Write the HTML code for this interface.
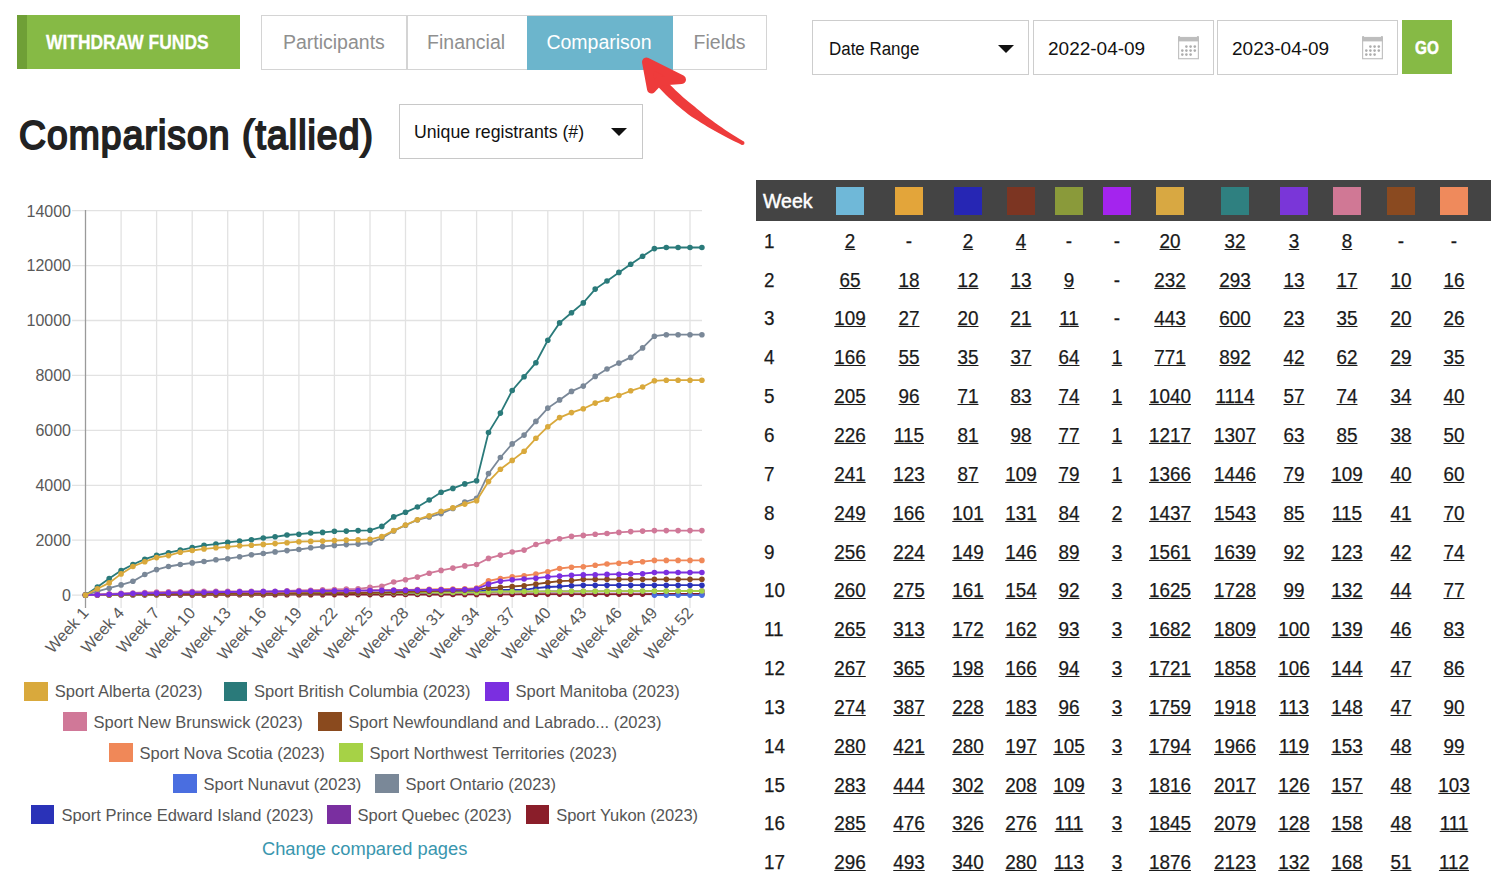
<!DOCTYPE html><html><head><meta charset="utf-8"><style>
*{margin:0;padding:0;box-sizing:border-box}
html,body{width:1491px;height:884px;overflow:hidden;background:#fff;font-family:"Liberation Sans",sans-serif}
.abs{position:absolute}
.lg{position:absolute;font-size:16.5px;color:#555;white-space:nowrap;line-height:20px}
.th{position:absolute;font-size:19.5px;color:#fff;white-space:nowrap;line-height:22px;-webkit-text-stroke:0.45px #fff}
.td{position:absolute;font-size:20.5px;color:#1a1a1a;white-space:nowrap;line-height:22px;-webkit-text-stroke:0.25px #1a1a1a;transform:scaleX(0.92);transform-origin:0 0}
.td.c{width:80px;text-align:center;transform-origin:40px 0}
.td.u span{text-decoration:underline;text-underline-offset:1.2px;text-decoration-thickness:1.4px}
.tab{position:absolute;top:15px;height:55px;border:1.5px solid #d4d4d4;font-size:19.5px;color:#8f8f8f;line-height:52px;text-align:center;white-space:nowrap}
.box{position:absolute;border:1.6px solid #cdcdcd;background:#fff;white-space:nowrap}
</style></head><body>
<div class="abs" style="left:17px;top:15px;width:223px;height:54px;background:#86ba45"></div>
<div class="abs" style="left:17px;top:15px;width:10px;height:54px;background:#6f9f36"></div>
<div class="abs" style="left:46px;top:30px;font-size:20.5px;font-weight:bold;color:#fff;line-height:24px;white-space:nowrap;-webkit-text-stroke:0.3px #fff;transform:scaleX(0.85);transform-origin:0 0">WITHDRAW FUNDS</div>
<div class="abs" style="left:260.5px;top:15px;width:506px;height:55px;border:1.5px solid #d4d4d4"></div>
<div class="abs" style="left:406px;top:15px;width:1.5px;height:55px;background:#d4d4d4"></div>
<div class="abs" style="left:527px;top:15.5px;width:145.5px;height:54px;background:#6cb5cc"></div>
<div class="abs" style="left:253.89999999999998px;top:16px;width:160px;text-align:center;font-size:19.5px;color:#8f8f8f;line-height:53px;white-space:nowrap">Participants</div>
<div class="abs" style="left:386.1px;top:16px;width:160px;text-align:center;font-size:19.5px;color:#8f8f8f;line-height:53px;white-space:nowrap">Financial</div>
<div class="abs" style="left:519px;top:16px;width:160px;text-align:center;font-size:19.5px;color:#fff;line-height:53px;white-space:nowrap">Comparison</div>
<div class="abs" style="left:639.6px;top:16px;width:160px;text-align:center;font-size:19.5px;color:#8f8f8f;line-height:53px;white-space:nowrap">Fields</div>
<div class="abs" style="left:18.8px;top:109.8px;font-size:40.6px;font-weight:normal;-webkit-text-stroke:2px #222;color:#222;line-height:50px;white-space:nowrap;letter-spacing:1.2px;transform:scaleX(0.917);transform-origin:0 0">Comparison (tallied)</div>
<div class="box" style="left:399px;top:104px;width:244px;height:55px;border-width:1.5px;border-color:#c8c8c8"></div>
<div class="abs" style="left:414px;top:121px;font-size:17.7px;color:#111;line-height:22px;white-space:nowrap">Unique registrants (#)</div>
<div class="abs" style="left:611px;top:128px;width:0;height:0;border-left:8px solid transparent;border-right:8px solid transparent;border-top:8px solid #111"></div>
<div class="box" style="left:812px;top:20px;width:217px;height:55px"></div>
<div class="abs" style="left:828.5px;top:38px;font-size:18px;color:#111;line-height:22px;white-space:nowrap;transform:scaleX(0.94);transform-origin:0 0">Date Range</div>
<div class="abs" style="left:998px;top:45px;width:0;height:0;border-left:8px solid transparent;border-right:8px solid transparent;border-top:8px solid #111"></div>
<div class="box" style="left:1033px;top:20px;width:181px;height:55px"></div>
<div class="abs" style="left:1048px;top:38px;font-size:19px;color:#111;line-height:22px;white-space:nowrap">2022-04-09</div>
<svg class="abs" style="left:1178px;top:36px" width="22" height="24"><rect x="0.6" y="1.5" width="19.8" height="21.2" fill="none" stroke="#c2c2c2" stroke-width="1.2"/><rect x="0" y="1.2" width="21" height="4.2" fill="#bdbdbd"/><rect x="0" y="0" width="2.2" height="3" rx="1" fill="#bdbdbd"/><rect x="18.8" y="0" width="2.2" height="3" rx="1" fill="#bdbdbd"/><circle cx="8.4" cy="10.6" r="1.3" fill="#adadad"/><circle cx="12.6" cy="10.6" r="1.3" fill="#adadad"/><circle cx="16.8" cy="10.6" r="1.3" fill="#adadad"/><circle cx="4.3" cy="14.6" r="1.3" fill="#adadad"/><circle cx="8.4" cy="14.6" r="1.3" fill="#adadad"/><circle cx="12.6" cy="14.6" r="1.3" fill="#adadad"/><circle cx="16.8" cy="14.6" r="1.3" fill="#adadad"/><circle cx="4.3" cy="18.6" r="1.3" fill="#adadad"/><circle cx="8.4" cy="18.6" r="1.3" fill="#adadad"/><circle cx="12.6" cy="18.6" r="1.3" fill="#adadad"/></svg>
<div class="box" style="left:1217px;top:20px;width:181px;height:55px"></div>
<div class="abs" style="left:1232px;top:38px;font-size:19px;color:#111;line-height:22px;white-space:nowrap">2023-04-09</div>
<svg class="abs" style="left:1362px;top:36px" width="22" height="24"><rect x="0.6" y="1.5" width="19.8" height="21.2" fill="none" stroke="#c2c2c2" stroke-width="1.2"/><rect x="0" y="1.2" width="21" height="4.2" fill="#bdbdbd"/><rect x="0" y="0" width="2.2" height="3" rx="1" fill="#bdbdbd"/><rect x="18.8" y="0" width="2.2" height="3" rx="1" fill="#bdbdbd"/><circle cx="8.4" cy="10.6" r="1.3" fill="#adadad"/><circle cx="12.6" cy="10.6" r="1.3" fill="#adadad"/><circle cx="16.8" cy="10.6" r="1.3" fill="#adadad"/><circle cx="4.3" cy="14.6" r="1.3" fill="#adadad"/><circle cx="8.4" cy="14.6" r="1.3" fill="#adadad"/><circle cx="12.6" cy="14.6" r="1.3" fill="#adadad"/><circle cx="16.8" cy="14.6" r="1.3" fill="#adadad"/><circle cx="4.3" cy="18.6" r="1.3" fill="#adadad"/><circle cx="8.4" cy="18.6" r="1.3" fill="#adadad"/><circle cx="12.6" cy="18.6" r="1.3" fill="#adadad"/></svg>
<div class="abs" style="left:1402px;top:20px;width:50px;height:54px;background:#86ba45"></div>
<div class="abs" style="left:1402px;top:36px;width:50px;text-align:center;font-size:18px;font-weight:bold;color:#fff;line-height:24px;-webkit-text-stroke:0.5px #fff;transform:scaleX(0.85)">GO</div>
<div style="position:absolute;left:756px;top:180px;width:735px;height:41px;background:#444"></div>
<div class="th" style="left:763px;top:190px">Week</div>
<div style="position:absolute;left:836.0px;top:187px;width:28px;height:28px;background:#6fb8d8"></div>
<div style="position:absolute;left:895.0px;top:187px;width:28px;height:28px;background:#e3a53a"></div>
<div style="position:absolute;left:954.0px;top:187px;width:28px;height:28px;background:#2626b4"></div>
<div style="position:absolute;left:1007.0px;top:187px;width:28px;height:28px;background:#7c3522"></div>
<div style="position:absolute;left:1055.0px;top:187px;width:28px;height:28px;background:#8a9a3a"></div>
<div style="position:absolute;left:1102.5px;top:187px;width:28px;height:28px;background:#a424ee"></div>
<div style="position:absolute;left:1156.0px;top:187px;width:28px;height:28px;background:#d8a842"></div>
<div style="position:absolute;left:1220.6px;top:187px;width:28px;height:28px;background:#2f8080"></div>
<div style="position:absolute;left:1280.0px;top:187px;width:28px;height:28px;background:#7a36d8"></div>
<div style="position:absolute;left:1333.0px;top:187px;width:28px;height:28px;background:#d07895"></div>
<div style="position:absolute;left:1386.6px;top:187px;width:28px;height:28px;background:#8a4a20"></div>
<div style="position:absolute;left:1440.0px;top:187px;width:28px;height:28px;background:#ef8a5c"></div>
<div class="td" style="left:764px;top:229.7px">1</div>
<div class="td c u" style="left:810.0px;top:229.7px"><span>2</span></div>
<div class="td c" style="left:869.0px;top:229.7px">-</div>
<div class="td c u" style="left:928.0px;top:229.7px"><span>2</span></div>
<div class="td c u" style="left:981.0px;top:229.7px"><span>4</span></div>
<div class="td c" style="left:1029.0px;top:229.7px">-</div>
<div class="td c" style="left:1076.5px;top:229.7px">-</div>
<div class="td c u" style="left:1130.0px;top:229.7px"><span>20</span></div>
<div class="td c u" style="left:1194.6px;top:229.7px"><span>32</span></div>
<div class="td c u" style="left:1254.0px;top:229.7px"><span>3</span></div>
<div class="td c u" style="left:1307.0px;top:229.7px"><span>8</span></div>
<div class="td c" style="left:1360.6px;top:229.7px">-</div>
<div class="td c" style="left:1414.0px;top:229.7px">-</div>
<div class="td" style="left:764px;top:268.6px">2</div>
<div class="td c u" style="left:810.0px;top:268.6px"><span>65</span></div>
<div class="td c u" style="left:869.0px;top:268.6px"><span>18</span></div>
<div class="td c u" style="left:928.0px;top:268.6px"><span>12</span></div>
<div class="td c u" style="left:981.0px;top:268.6px"><span>13</span></div>
<div class="td c u" style="left:1029.0px;top:268.6px"><span>9</span></div>
<div class="td c" style="left:1076.5px;top:268.6px">-</div>
<div class="td c u" style="left:1130.0px;top:268.6px"><span>232</span></div>
<div class="td c u" style="left:1194.6px;top:268.6px"><span>293</span></div>
<div class="td c u" style="left:1254.0px;top:268.6px"><span>13</span></div>
<div class="td c u" style="left:1307.0px;top:268.6px"><span>17</span></div>
<div class="td c u" style="left:1360.6px;top:268.6px"><span>10</span></div>
<div class="td c u" style="left:1414.0px;top:268.6px"><span>16</span></div>
<div class="td" style="left:764px;top:307.4px">3</div>
<div class="td c u" style="left:810.0px;top:307.4px"><span>109</span></div>
<div class="td c u" style="left:869.0px;top:307.4px"><span>27</span></div>
<div class="td c u" style="left:928.0px;top:307.4px"><span>20</span></div>
<div class="td c u" style="left:981.0px;top:307.4px"><span>21</span></div>
<div class="td c u" style="left:1029.0px;top:307.4px"><span>11</span></div>
<div class="td c" style="left:1076.5px;top:307.4px">-</div>
<div class="td c u" style="left:1130.0px;top:307.4px"><span>443</span></div>
<div class="td c u" style="left:1194.6px;top:307.4px"><span>600</span></div>
<div class="td c u" style="left:1254.0px;top:307.4px"><span>23</span></div>
<div class="td c u" style="left:1307.0px;top:307.4px"><span>35</span></div>
<div class="td c u" style="left:1360.6px;top:307.4px"><span>20</span></div>
<div class="td c u" style="left:1414.0px;top:307.4px"><span>26</span></div>
<div class="td" style="left:764px;top:346.2px">4</div>
<div class="td c u" style="left:810.0px;top:346.2px"><span>166</span></div>
<div class="td c u" style="left:869.0px;top:346.2px"><span>55</span></div>
<div class="td c u" style="left:928.0px;top:346.2px"><span>35</span></div>
<div class="td c u" style="left:981.0px;top:346.2px"><span>37</span></div>
<div class="td c u" style="left:1029.0px;top:346.2px"><span>64</span></div>
<div class="td c u" style="left:1076.5px;top:346.2px"><span>1</span></div>
<div class="td c u" style="left:1130.0px;top:346.2px"><span>771</span></div>
<div class="td c u" style="left:1194.6px;top:346.2px"><span>892</span></div>
<div class="td c u" style="left:1254.0px;top:346.2px"><span>42</span></div>
<div class="td c u" style="left:1307.0px;top:346.2px"><span>62</span></div>
<div class="td c u" style="left:1360.6px;top:346.2px"><span>29</span></div>
<div class="td c u" style="left:1414.0px;top:346.2px"><span>35</span></div>
<div class="td" style="left:764px;top:385.1px">5</div>
<div class="td c u" style="left:810.0px;top:385.1px"><span>205</span></div>
<div class="td c u" style="left:869.0px;top:385.1px"><span>96</span></div>
<div class="td c u" style="left:928.0px;top:385.1px"><span>71</span></div>
<div class="td c u" style="left:981.0px;top:385.1px"><span>83</span></div>
<div class="td c u" style="left:1029.0px;top:385.1px"><span>74</span></div>
<div class="td c u" style="left:1076.5px;top:385.1px"><span>1</span></div>
<div class="td c u" style="left:1130.0px;top:385.1px"><span>1040</span></div>
<div class="td c u" style="left:1194.6px;top:385.1px"><span>1114</span></div>
<div class="td c u" style="left:1254.0px;top:385.1px"><span>57</span></div>
<div class="td c u" style="left:1307.0px;top:385.1px"><span>74</span></div>
<div class="td c u" style="left:1360.6px;top:385.1px"><span>34</span></div>
<div class="td c u" style="left:1414.0px;top:385.1px"><span>40</span></div>
<div class="td" style="left:764px;top:423.9px">6</div>
<div class="td c u" style="left:810.0px;top:423.9px"><span>226</span></div>
<div class="td c u" style="left:869.0px;top:423.9px"><span>115</span></div>
<div class="td c u" style="left:928.0px;top:423.9px"><span>81</span></div>
<div class="td c u" style="left:981.0px;top:423.9px"><span>98</span></div>
<div class="td c u" style="left:1029.0px;top:423.9px"><span>77</span></div>
<div class="td c u" style="left:1076.5px;top:423.9px"><span>1</span></div>
<div class="td c u" style="left:1130.0px;top:423.9px"><span>1217</span></div>
<div class="td c u" style="left:1194.6px;top:423.9px"><span>1307</span></div>
<div class="td c u" style="left:1254.0px;top:423.9px"><span>63</span></div>
<div class="td c u" style="left:1307.0px;top:423.9px"><span>85</span></div>
<div class="td c u" style="left:1360.6px;top:423.9px"><span>38</span></div>
<div class="td c u" style="left:1414.0px;top:423.9px"><span>50</span></div>
<div class="td" style="left:764px;top:462.8px">7</div>
<div class="td c u" style="left:810.0px;top:462.8px"><span>241</span></div>
<div class="td c u" style="left:869.0px;top:462.8px"><span>123</span></div>
<div class="td c u" style="left:928.0px;top:462.8px"><span>87</span></div>
<div class="td c u" style="left:981.0px;top:462.8px"><span>109</span></div>
<div class="td c u" style="left:1029.0px;top:462.8px"><span>79</span></div>
<div class="td c u" style="left:1076.5px;top:462.8px"><span>1</span></div>
<div class="td c u" style="left:1130.0px;top:462.8px"><span>1366</span></div>
<div class="td c u" style="left:1194.6px;top:462.8px"><span>1446</span></div>
<div class="td c u" style="left:1254.0px;top:462.8px"><span>79</span></div>
<div class="td c u" style="left:1307.0px;top:462.8px"><span>109</span></div>
<div class="td c u" style="left:1360.6px;top:462.8px"><span>40</span></div>
<div class="td c u" style="left:1414.0px;top:462.8px"><span>60</span></div>
<div class="td" style="left:764px;top:501.6px">8</div>
<div class="td c u" style="left:810.0px;top:501.6px"><span>249</span></div>
<div class="td c u" style="left:869.0px;top:501.6px"><span>166</span></div>
<div class="td c u" style="left:928.0px;top:501.6px"><span>101</span></div>
<div class="td c u" style="left:981.0px;top:501.6px"><span>131</span></div>
<div class="td c u" style="left:1029.0px;top:501.6px"><span>84</span></div>
<div class="td c u" style="left:1076.5px;top:501.6px"><span>2</span></div>
<div class="td c u" style="left:1130.0px;top:501.6px"><span>1437</span></div>
<div class="td c u" style="left:1194.6px;top:501.6px"><span>1543</span></div>
<div class="td c u" style="left:1254.0px;top:501.6px"><span>85</span></div>
<div class="td c u" style="left:1307.0px;top:501.6px"><span>115</span></div>
<div class="td c u" style="left:1360.6px;top:501.6px"><span>41</span></div>
<div class="td c u" style="left:1414.0px;top:501.6px"><span>70</span></div>
<div class="td" style="left:764px;top:540.5px">9</div>
<div class="td c u" style="left:810.0px;top:540.5px"><span>256</span></div>
<div class="td c u" style="left:869.0px;top:540.5px"><span>224</span></div>
<div class="td c u" style="left:928.0px;top:540.5px"><span>149</span></div>
<div class="td c u" style="left:981.0px;top:540.5px"><span>146</span></div>
<div class="td c u" style="left:1029.0px;top:540.5px"><span>89</span></div>
<div class="td c u" style="left:1076.5px;top:540.5px"><span>3</span></div>
<div class="td c u" style="left:1130.0px;top:540.5px"><span>1561</span></div>
<div class="td c u" style="left:1194.6px;top:540.5px"><span>1639</span></div>
<div class="td c u" style="left:1254.0px;top:540.5px"><span>92</span></div>
<div class="td c u" style="left:1307.0px;top:540.5px"><span>123</span></div>
<div class="td c u" style="left:1360.6px;top:540.5px"><span>42</span></div>
<div class="td c u" style="left:1414.0px;top:540.5px"><span>74</span></div>
<div class="td" style="left:764px;top:579.4px">10</div>
<div class="td c u" style="left:810.0px;top:579.4px"><span>260</span></div>
<div class="td c u" style="left:869.0px;top:579.4px"><span>275</span></div>
<div class="td c u" style="left:928.0px;top:579.4px"><span>161</span></div>
<div class="td c u" style="left:981.0px;top:579.4px"><span>154</span></div>
<div class="td c u" style="left:1029.0px;top:579.4px"><span>92</span></div>
<div class="td c u" style="left:1076.5px;top:579.4px"><span>3</span></div>
<div class="td c u" style="left:1130.0px;top:579.4px"><span>1625</span></div>
<div class="td c u" style="left:1194.6px;top:579.4px"><span>1728</span></div>
<div class="td c u" style="left:1254.0px;top:579.4px"><span>99</span></div>
<div class="td c u" style="left:1307.0px;top:579.4px"><span>132</span></div>
<div class="td c u" style="left:1360.6px;top:579.4px"><span>44</span></div>
<div class="td c u" style="left:1414.0px;top:579.4px"><span>77</span></div>
<div class="td" style="left:764px;top:618.2px">11</div>
<div class="td c u" style="left:810.0px;top:618.2px"><span>265</span></div>
<div class="td c u" style="left:869.0px;top:618.2px"><span>313</span></div>
<div class="td c u" style="left:928.0px;top:618.2px"><span>172</span></div>
<div class="td c u" style="left:981.0px;top:618.2px"><span>162</span></div>
<div class="td c u" style="left:1029.0px;top:618.2px"><span>93</span></div>
<div class="td c u" style="left:1076.5px;top:618.2px"><span>3</span></div>
<div class="td c u" style="left:1130.0px;top:618.2px"><span>1682</span></div>
<div class="td c u" style="left:1194.6px;top:618.2px"><span>1809</span></div>
<div class="td c u" style="left:1254.0px;top:618.2px"><span>100</span></div>
<div class="td c u" style="left:1307.0px;top:618.2px"><span>139</span></div>
<div class="td c u" style="left:1360.6px;top:618.2px"><span>46</span></div>
<div class="td c u" style="left:1414.0px;top:618.2px"><span>83</span></div>
<div class="td" style="left:764px;top:657.1px">12</div>
<div class="td c u" style="left:810.0px;top:657.1px"><span>267</span></div>
<div class="td c u" style="left:869.0px;top:657.1px"><span>365</span></div>
<div class="td c u" style="left:928.0px;top:657.1px"><span>198</span></div>
<div class="td c u" style="left:981.0px;top:657.1px"><span>166</span></div>
<div class="td c u" style="left:1029.0px;top:657.1px"><span>94</span></div>
<div class="td c u" style="left:1076.5px;top:657.1px"><span>3</span></div>
<div class="td c u" style="left:1130.0px;top:657.1px"><span>1721</span></div>
<div class="td c u" style="left:1194.6px;top:657.1px"><span>1858</span></div>
<div class="td c u" style="left:1254.0px;top:657.1px"><span>106</span></div>
<div class="td c u" style="left:1307.0px;top:657.1px"><span>144</span></div>
<div class="td c u" style="left:1360.6px;top:657.1px"><span>47</span></div>
<div class="td c u" style="left:1414.0px;top:657.1px"><span>86</span></div>
<div class="td" style="left:764px;top:695.9px">13</div>
<div class="td c u" style="left:810.0px;top:695.9px"><span>274</span></div>
<div class="td c u" style="left:869.0px;top:695.9px"><span>387</span></div>
<div class="td c u" style="left:928.0px;top:695.9px"><span>228</span></div>
<div class="td c u" style="left:981.0px;top:695.9px"><span>183</span></div>
<div class="td c u" style="left:1029.0px;top:695.9px"><span>96</span></div>
<div class="td c u" style="left:1076.5px;top:695.9px"><span>3</span></div>
<div class="td c u" style="left:1130.0px;top:695.9px"><span>1759</span></div>
<div class="td c u" style="left:1194.6px;top:695.9px"><span>1918</span></div>
<div class="td c u" style="left:1254.0px;top:695.9px"><span>113</span></div>
<div class="td c u" style="left:1307.0px;top:695.9px"><span>148</span></div>
<div class="td c u" style="left:1360.6px;top:695.9px"><span>47</span></div>
<div class="td c u" style="left:1414.0px;top:695.9px"><span>90</span></div>
<div class="td" style="left:764px;top:734.8px">14</div>
<div class="td c u" style="left:810.0px;top:734.8px"><span>280</span></div>
<div class="td c u" style="left:869.0px;top:734.8px"><span>421</span></div>
<div class="td c u" style="left:928.0px;top:734.8px"><span>280</span></div>
<div class="td c u" style="left:981.0px;top:734.8px"><span>197</span></div>
<div class="td c u" style="left:1029.0px;top:734.8px"><span>105</span></div>
<div class="td c u" style="left:1076.5px;top:734.8px"><span>3</span></div>
<div class="td c u" style="left:1130.0px;top:734.8px"><span>1794</span></div>
<div class="td c u" style="left:1194.6px;top:734.8px"><span>1966</span></div>
<div class="td c u" style="left:1254.0px;top:734.8px"><span>119</span></div>
<div class="td c u" style="left:1307.0px;top:734.8px"><span>153</span></div>
<div class="td c u" style="left:1360.6px;top:734.8px"><span>48</span></div>
<div class="td c u" style="left:1414.0px;top:734.8px"><span>99</span></div>
<div class="td" style="left:764px;top:773.6px">15</div>
<div class="td c u" style="left:810.0px;top:773.6px"><span>283</span></div>
<div class="td c u" style="left:869.0px;top:773.6px"><span>444</span></div>
<div class="td c u" style="left:928.0px;top:773.6px"><span>302</span></div>
<div class="td c u" style="left:981.0px;top:773.6px"><span>208</span></div>
<div class="td c u" style="left:1029.0px;top:773.6px"><span>109</span></div>
<div class="td c u" style="left:1076.5px;top:773.6px"><span>3</span></div>
<div class="td c u" style="left:1130.0px;top:773.6px"><span>1816</span></div>
<div class="td c u" style="left:1194.6px;top:773.6px"><span>2017</span></div>
<div class="td c u" style="left:1254.0px;top:773.6px"><span>126</span></div>
<div class="td c u" style="left:1307.0px;top:773.6px"><span>157</span></div>
<div class="td c u" style="left:1360.6px;top:773.6px"><span>48</span></div>
<div class="td c u" style="left:1414.0px;top:773.6px"><span>103</span></div>
<div class="td" style="left:764px;top:812.4px">16</div>
<div class="td c u" style="left:810.0px;top:812.4px"><span>285</span></div>
<div class="td c u" style="left:869.0px;top:812.4px"><span>476</span></div>
<div class="td c u" style="left:928.0px;top:812.4px"><span>326</span></div>
<div class="td c u" style="left:981.0px;top:812.4px"><span>276</span></div>
<div class="td c u" style="left:1029.0px;top:812.4px"><span>111</span></div>
<div class="td c u" style="left:1076.5px;top:812.4px"><span>3</span></div>
<div class="td c u" style="left:1130.0px;top:812.4px"><span>1845</span></div>
<div class="td c u" style="left:1194.6px;top:812.4px"><span>2079</span></div>
<div class="td c u" style="left:1254.0px;top:812.4px"><span>128</span></div>
<div class="td c u" style="left:1307.0px;top:812.4px"><span>158</span></div>
<div class="td c u" style="left:1360.6px;top:812.4px"><span>48</span></div>
<div class="td c u" style="left:1414.0px;top:812.4px"><span>111</span></div>
<div class="td" style="left:764px;top:851.3px">17</div>
<div class="td c u" style="left:810.0px;top:851.3px"><span>296</span></div>
<div class="td c u" style="left:869.0px;top:851.3px"><span>493</span></div>
<div class="td c u" style="left:928.0px;top:851.3px"><span>340</span></div>
<div class="td c u" style="left:981.0px;top:851.3px"><span>280</span></div>
<div class="td c u" style="left:1029.0px;top:851.3px"><span>113</span></div>
<div class="td c u" style="left:1076.5px;top:851.3px"><span>3</span></div>
<div class="td c u" style="left:1130.0px;top:851.3px"><span>1876</span></div>
<div class="td c u" style="left:1194.6px;top:851.3px"><span>2123</span></div>
<div class="td c u" style="left:1254.0px;top:851.3px"><span>132</span></div>
<div class="td c u" style="left:1307.0px;top:851.3px"><span>168</span></div>
<div class="td c u" style="left:1360.6px;top:851.3px"><span>51</span></div>
<div class="td c u" style="left:1414.0px;top:851.3px"><span>112</span></div>
<svg width="1491" height="884" style="position:absolute;left:0;top:0">
<line x1="72" y1="595.1" x2="702" y2="595.1" stroke="#e2e2e2" stroke-width="1.3"/>
<line x1="72" y1="540.2" x2="702" y2="540.2" stroke="#e2e2e2" stroke-width="1.3"/>
<line x1="72" y1="485.3" x2="702" y2="485.3" stroke="#e2e2e2" stroke-width="1.3"/>
<line x1="72" y1="430.3" x2="702" y2="430.3" stroke="#e2e2e2" stroke-width="1.3"/>
<line x1="72" y1="375.4" x2="702" y2="375.4" stroke="#e2e2e2" stroke-width="1.3"/>
<line x1="72" y1="320.5" x2="702" y2="320.5" stroke="#e2e2e2" stroke-width="1.3"/>
<line x1="72" y1="265.6" x2="702" y2="265.6" stroke="#e2e2e2" stroke-width="1.3"/>
<line x1="72" y1="210.7" x2="702" y2="210.7" stroke="#e2e2e2" stroke-width="1.3"/>
<line x1="85.5" y1="210" x2="85.5" y2="608" stroke="#9a9a9a" stroke-width="1.3"/>
<line x1="121.1" y1="210" x2="121.1" y2="608" stroke="#e2e2e2" stroke-width="1.3"/>
<line x1="156.6" y1="210" x2="156.6" y2="608" stroke="#e2e2e2" stroke-width="1.3"/>
<line x1="192.2" y1="210" x2="192.2" y2="608" stroke="#e2e2e2" stroke-width="1.3"/>
<line x1="227.7" y1="210" x2="227.7" y2="608" stroke="#e2e2e2" stroke-width="1.3"/>
<line x1="263.3" y1="210" x2="263.3" y2="608" stroke="#e2e2e2" stroke-width="1.3"/>
<line x1="298.9" y1="210" x2="298.9" y2="608" stroke="#e2e2e2" stroke-width="1.3"/>
<line x1="334.4" y1="210" x2="334.4" y2="608" stroke="#e2e2e2" stroke-width="1.3"/>
<line x1="370.0" y1="210" x2="370.0" y2="608" stroke="#e2e2e2" stroke-width="1.3"/>
<line x1="405.5" y1="210" x2="405.5" y2="608" stroke="#e2e2e2" stroke-width="1.3"/>
<line x1="441.1" y1="210" x2="441.1" y2="608" stroke="#e2e2e2" stroke-width="1.3"/>
<line x1="476.6" y1="210" x2="476.6" y2="608" stroke="#e2e2e2" stroke-width="1.3"/>
<line x1="512.2" y1="210" x2="512.2" y2="608" stroke="#e2e2e2" stroke-width="1.3"/>
<line x1="547.8" y1="210" x2="547.8" y2="608" stroke="#e2e2e2" stroke-width="1.3"/>
<line x1="583.3" y1="210" x2="583.3" y2="608" stroke="#e2e2e2" stroke-width="1.3"/>
<line x1="618.9" y1="210" x2="618.9" y2="608" stroke="#e2e2e2" stroke-width="1.3"/>
<line x1="654.4" y1="210" x2="654.4" y2="608" stroke="#e2e2e2" stroke-width="1.3"/>
<line x1="690.0" y1="210" x2="690.0" y2="608" stroke="#e2e2e2" stroke-width="1.3"/>
<text x="71" y="600.9" text-anchor="end" font-family="Liberation Sans" font-size="16" fill="#595959">0</text>
<text x="71" y="546.0" text-anchor="end" font-family="Liberation Sans" font-size="16" fill="#595959">2000</text>
<text x="71" y="491.1" text-anchor="end" font-family="Liberation Sans" font-size="16" fill="#595959">4000</text>
<text x="71" y="436.1" text-anchor="end" font-family="Liberation Sans" font-size="16" fill="#595959">6000</text>
<text x="71" y="381.2" text-anchor="end" font-family="Liberation Sans" font-size="16" fill="#595959">8000</text>
<text x="71" y="326.3" text-anchor="end" font-family="Liberation Sans" font-size="16" fill="#595959">10000</text>
<text x="71" y="271.4" text-anchor="end" font-family="Liberation Sans" font-size="16" fill="#595959">12000</text>
<text x="71" y="216.5" text-anchor="end" font-family="Liberation Sans" font-size="16" fill="#595959">14000</text>
<text transform="translate(89.5,613.5) rotate(-48)" text-anchor="end" font-family="Liberation Sans" font-size="16.3" fill="#595959">Week 1</text>
<text transform="translate(125.1,613.5) rotate(-48)" text-anchor="end" font-family="Liberation Sans" font-size="16.3" fill="#595959">Week 4</text>
<text transform="translate(160.6,613.5) rotate(-48)" text-anchor="end" font-family="Liberation Sans" font-size="16.3" fill="#595959">Week 7</text>
<text transform="translate(196.2,613.5) rotate(-48)" text-anchor="end" font-family="Liberation Sans" font-size="16.3" fill="#595959">Week 10</text>
<text transform="translate(231.7,613.5) rotate(-48)" text-anchor="end" font-family="Liberation Sans" font-size="16.3" fill="#595959">Week 13</text>
<text transform="translate(267.3,613.5) rotate(-48)" text-anchor="end" font-family="Liberation Sans" font-size="16.3" fill="#595959">Week 16</text>
<text transform="translate(302.9,613.5) rotate(-48)" text-anchor="end" font-family="Liberation Sans" font-size="16.3" fill="#595959">Week 19</text>
<text transform="translate(338.4,613.5) rotate(-48)" text-anchor="end" font-family="Liberation Sans" font-size="16.3" fill="#595959">Week 22</text>
<text transform="translate(374.0,613.5) rotate(-48)" text-anchor="end" font-family="Liberation Sans" font-size="16.3" fill="#595959">Week 25</text>
<text transform="translate(409.5,613.5) rotate(-48)" text-anchor="end" font-family="Liberation Sans" font-size="16.3" fill="#595959">Week 28</text>
<text transform="translate(445.1,613.5) rotate(-48)" text-anchor="end" font-family="Liberation Sans" font-size="16.3" fill="#595959">Week 31</text>
<text transform="translate(480.6,613.5) rotate(-48)" text-anchor="end" font-family="Liberation Sans" font-size="16.3" fill="#595959">Week 34</text>
<text transform="translate(516.2,613.5) rotate(-48)" text-anchor="end" font-family="Liberation Sans" font-size="16.3" fill="#595959">Week 37</text>
<text transform="translate(551.8,613.5) rotate(-48)" text-anchor="end" font-family="Liberation Sans" font-size="16.3" fill="#595959">Week 40</text>
<text transform="translate(587.3,613.5) rotate(-48)" text-anchor="end" font-family="Liberation Sans" font-size="16.3" fill="#595959">Week 43</text>
<text transform="translate(622.9,613.5) rotate(-48)" text-anchor="end" font-family="Liberation Sans" font-size="16.3" fill="#595959">Week 46</text>
<text transform="translate(658.4,613.5) rotate(-48)" text-anchor="end" font-family="Liberation Sans" font-size="16.3" fill="#595959">Week 49</text>
<text transform="translate(694.0,613.5) rotate(-48)" text-anchor="end" font-family="Liberation Sans" font-size="16.3" fill="#595959">Week 52</text>
<polyline points="85.5,595.1 97.4,595.1 109.2,595.1 121.1,595.0 132.9,595.0 144.8,595.0 156.6,595.0 168.5,594.9 180.3,594.9 192.2,594.9 204.0,594.9 215.9,594.9 227.7,594.8 239.6,594.8 251.4,594.8 263.3,594.8 275.1,594.8 287.0,594.7 298.9,594.7 310.7,594.7 322.6,594.7 334.4,594.6 346.3,594.6 358.1,594.6 370.0,594.6 381.8,594.6 393.7,594.6 405.5,594.5 417.4,594.5 429.2,594.5 441.1,594.5 452.9,594.5 464.8,594.4 476.6,594.4 488.5,594.4 500.4,594.3 512.2,594.3 524.1,594.2 535.9,594.2 547.8,594.1 559.6,594.1 571.5,594.1 583.3,594.1 595.2,594.1 607.0,594.1 618.9,594.1 630.7,594.1 642.6,594.1 654.4,594.0 666.3,594.0 678.1,594.0 690.0,594.0 701.9,594.0" fill="none" stroke="#8a1e2a" stroke-width="1.8"/>
<circle cx="85.5" cy="595.1" r="2.8" fill="#8a1e2a"/>
<circle cx="97.4" cy="595.1" r="2.8" fill="#8a1e2a"/>
<circle cx="109.2" cy="595.1" r="2.8" fill="#8a1e2a"/>
<circle cx="121.1" cy="595.0" r="2.8" fill="#8a1e2a"/>
<circle cx="132.9" cy="595.0" r="2.8" fill="#8a1e2a"/>
<circle cx="144.8" cy="595.0" r="2.8" fill="#8a1e2a"/>
<circle cx="156.6" cy="595.0" r="2.8" fill="#8a1e2a"/>
<circle cx="168.5" cy="594.9" r="2.8" fill="#8a1e2a"/>
<circle cx="180.3" cy="594.9" r="2.8" fill="#8a1e2a"/>
<circle cx="192.2" cy="594.9" r="2.8" fill="#8a1e2a"/>
<circle cx="204.0" cy="594.9" r="2.8" fill="#8a1e2a"/>
<circle cx="215.9" cy="594.9" r="2.8" fill="#8a1e2a"/>
<circle cx="227.7" cy="594.8" r="2.8" fill="#8a1e2a"/>
<circle cx="239.6" cy="594.8" r="2.8" fill="#8a1e2a"/>
<circle cx="251.4" cy="594.8" r="2.8" fill="#8a1e2a"/>
<circle cx="263.3" cy="594.8" r="2.8" fill="#8a1e2a"/>
<circle cx="275.1" cy="594.8" r="2.8" fill="#8a1e2a"/>
<circle cx="287.0" cy="594.7" r="2.8" fill="#8a1e2a"/>
<circle cx="298.9" cy="594.7" r="2.8" fill="#8a1e2a"/>
<circle cx="310.7" cy="594.7" r="2.8" fill="#8a1e2a"/>
<circle cx="322.6" cy="594.7" r="2.8" fill="#8a1e2a"/>
<circle cx="334.4" cy="594.6" r="2.8" fill="#8a1e2a"/>
<circle cx="346.3" cy="594.6" r="2.8" fill="#8a1e2a"/>
<circle cx="358.1" cy="594.6" r="2.8" fill="#8a1e2a"/>
<circle cx="370.0" cy="594.6" r="2.8" fill="#8a1e2a"/>
<circle cx="381.8" cy="594.6" r="2.8" fill="#8a1e2a"/>
<circle cx="393.7" cy="594.6" r="2.8" fill="#8a1e2a"/>
<circle cx="405.5" cy="594.5" r="2.8" fill="#8a1e2a"/>
<circle cx="417.4" cy="594.5" r="2.8" fill="#8a1e2a"/>
<circle cx="429.2" cy="594.5" r="2.8" fill="#8a1e2a"/>
<circle cx="441.1" cy="594.5" r="2.8" fill="#8a1e2a"/>
<circle cx="452.9" cy="594.5" r="2.8" fill="#8a1e2a"/>
<circle cx="464.8" cy="594.4" r="2.8" fill="#8a1e2a"/>
<circle cx="476.6" cy="594.4" r="2.8" fill="#8a1e2a"/>
<circle cx="488.5" cy="594.4" r="2.8" fill="#8a1e2a"/>
<circle cx="500.4" cy="594.3" r="2.8" fill="#8a1e2a"/>
<circle cx="512.2" cy="594.3" r="2.8" fill="#8a1e2a"/>
<circle cx="524.1" cy="594.2" r="2.8" fill="#8a1e2a"/>
<circle cx="535.9" cy="594.2" r="2.8" fill="#8a1e2a"/>
<circle cx="547.8" cy="594.1" r="2.8" fill="#8a1e2a"/>
<circle cx="559.6" cy="594.1" r="2.8" fill="#8a1e2a"/>
<circle cx="571.5" cy="594.1" r="2.8" fill="#8a1e2a"/>
<circle cx="583.3" cy="594.1" r="2.8" fill="#8a1e2a"/>
<circle cx="595.2" cy="594.1" r="2.8" fill="#8a1e2a"/>
<circle cx="607.0" cy="594.1" r="2.8" fill="#8a1e2a"/>
<circle cx="618.9" cy="594.1" r="2.8" fill="#8a1e2a"/>
<circle cx="630.7" cy="594.1" r="2.8" fill="#8a1e2a"/>
<circle cx="642.6" cy="594.1" r="2.8" fill="#8a1e2a"/>
<circle cx="654.4" cy="594.0" r="2.8" fill="#8a1e2a"/>
<circle cx="666.3" cy="594.0" r="2.8" fill="#8a1e2a"/>
<circle cx="678.1" cy="594.0" r="2.8" fill="#8a1e2a"/>
<circle cx="690.0" cy="594.0" r="2.8" fill="#8a1e2a"/>
<circle cx="701.9" cy="594.0" r="2.8" fill="#8a1e2a"/>
<polyline points="85.5,595.1 97.4,595.0 109.2,594.9 121.1,594.8 132.9,594.7 144.8,594.6 156.6,594.5 168.5,594.4 180.3,594.2 192.2,594.1 204.0,594.1 215.9,594.0 227.7,593.9 239.6,593.9 251.4,593.8 263.3,593.7 275.1,593.7 287.0,593.6 298.9,593.5 310.7,593.5 322.6,593.4 334.4,593.3 346.3,593.2 358.1,593.2 370.0,593.1 381.8,593.0 393.7,593.0 405.5,592.9 417.4,592.8 429.2,592.8 441.1,592.7 452.9,592.6 464.8,592.6 476.6,592.5 488.5,592.1 500.4,591.7 512.2,591.6 524.1,591.6 535.9,591.6 547.8,591.5 559.6,591.5 571.5,591.5 583.3,591.4 595.2,591.4 607.0,591.4 618.9,591.3 630.7,591.3 642.6,591.3 654.4,591.2 666.3,591.2 678.1,591.2 690.0,591.2 701.9,591.1" fill="none" stroke="#7a2fa0" stroke-width="1.8"/>
<circle cx="85.5" cy="595.1" r="2.8" fill="#7a2fa0"/>
<circle cx="97.4" cy="595.0" r="2.8" fill="#7a2fa0"/>
<circle cx="109.2" cy="594.9" r="2.8" fill="#7a2fa0"/>
<circle cx="121.1" cy="594.8" r="2.8" fill="#7a2fa0"/>
<circle cx="132.9" cy="594.7" r="2.8" fill="#7a2fa0"/>
<circle cx="144.8" cy="594.6" r="2.8" fill="#7a2fa0"/>
<circle cx="156.6" cy="594.5" r="2.8" fill="#7a2fa0"/>
<circle cx="168.5" cy="594.4" r="2.8" fill="#7a2fa0"/>
<circle cx="180.3" cy="594.2" r="2.8" fill="#7a2fa0"/>
<circle cx="192.2" cy="594.1" r="2.8" fill="#7a2fa0"/>
<circle cx="204.0" cy="594.1" r="2.8" fill="#7a2fa0"/>
<circle cx="215.9" cy="594.0" r="2.8" fill="#7a2fa0"/>
<circle cx="227.7" cy="593.9" r="2.8" fill="#7a2fa0"/>
<circle cx="239.6" cy="593.9" r="2.8" fill="#7a2fa0"/>
<circle cx="251.4" cy="593.8" r="2.8" fill="#7a2fa0"/>
<circle cx="263.3" cy="593.7" r="2.8" fill="#7a2fa0"/>
<circle cx="275.1" cy="593.7" r="2.8" fill="#7a2fa0"/>
<circle cx="287.0" cy="593.6" r="2.8" fill="#7a2fa0"/>
<circle cx="298.9" cy="593.5" r="2.8" fill="#7a2fa0"/>
<circle cx="310.7" cy="593.5" r="2.8" fill="#7a2fa0"/>
<circle cx="322.6" cy="593.4" r="2.8" fill="#7a2fa0"/>
<circle cx="334.4" cy="593.3" r="2.8" fill="#7a2fa0"/>
<circle cx="346.3" cy="593.2" r="2.8" fill="#7a2fa0"/>
<circle cx="358.1" cy="593.2" r="2.8" fill="#7a2fa0"/>
<circle cx="370.0" cy="593.1" r="2.8" fill="#7a2fa0"/>
<circle cx="381.8" cy="593.0" r="2.8" fill="#7a2fa0"/>
<circle cx="393.7" cy="593.0" r="2.8" fill="#7a2fa0"/>
<circle cx="405.5" cy="592.9" r="2.8" fill="#7a2fa0"/>
<circle cx="417.4" cy="592.8" r="2.8" fill="#7a2fa0"/>
<circle cx="429.2" cy="592.8" r="2.8" fill="#7a2fa0"/>
<circle cx="441.1" cy="592.7" r="2.8" fill="#7a2fa0"/>
<circle cx="452.9" cy="592.6" r="2.8" fill="#7a2fa0"/>
<circle cx="464.8" cy="592.6" r="2.8" fill="#7a2fa0"/>
<circle cx="476.6" cy="592.5" r="2.8" fill="#7a2fa0"/>
<circle cx="488.5" cy="592.1" r="2.8" fill="#7a2fa0"/>
<circle cx="500.4" cy="591.7" r="2.8" fill="#7a2fa0"/>
<circle cx="512.2" cy="591.6" r="2.8" fill="#7a2fa0"/>
<circle cx="524.1" cy="591.6" r="2.8" fill="#7a2fa0"/>
<circle cx="535.9" cy="591.6" r="2.8" fill="#7a2fa0"/>
<circle cx="547.8" cy="591.5" r="2.8" fill="#7a2fa0"/>
<circle cx="559.6" cy="591.5" r="2.8" fill="#7a2fa0"/>
<circle cx="571.5" cy="591.5" r="2.8" fill="#7a2fa0"/>
<circle cx="583.3" cy="591.4" r="2.8" fill="#7a2fa0"/>
<circle cx="595.2" cy="591.4" r="2.8" fill="#7a2fa0"/>
<circle cx="607.0" cy="591.4" r="2.8" fill="#7a2fa0"/>
<circle cx="618.9" cy="591.3" r="2.8" fill="#7a2fa0"/>
<circle cx="630.7" cy="591.3" r="2.8" fill="#7a2fa0"/>
<circle cx="642.6" cy="591.3" r="2.8" fill="#7a2fa0"/>
<circle cx="654.4" cy="591.2" r="2.8" fill="#7a2fa0"/>
<circle cx="666.3" cy="591.2" r="2.8" fill="#7a2fa0"/>
<circle cx="678.1" cy="591.2" r="2.8" fill="#7a2fa0"/>
<circle cx="690.0" cy="591.2" r="2.8" fill="#7a2fa0"/>
<circle cx="701.9" cy="591.1" r="2.8" fill="#7a2fa0"/>
<polyline points="85.5,595.1 97.4,594.8 109.2,594.6 121.1,594.3 132.9,594.2 144.8,594.1 156.6,594.1 168.5,594.0 180.3,594.0 192.2,593.9 204.0,593.8 215.9,593.8 227.7,593.7 239.6,593.6 251.4,593.6 263.3,593.5 275.1,593.5 287.0,593.4 298.9,593.3 310.7,593.2 322.6,593.1 334.4,593.0 346.3,592.9 358.1,592.8 370.0,592.7 381.8,592.6 393.7,592.5 405.5,592.5 417.4,592.4 429.2,592.3 441.1,592.2 452.9,592.1 464.8,592.0 476.6,591.9 488.5,589.8 500.4,589.8 512.2,589.8 524.1,589.8 535.9,588.1 547.8,587.0 559.6,586.5 571.5,585.7 583.3,585.2 595.2,585.2 607.0,585.2 618.9,585.2 630.7,585.2 642.6,585.2 654.4,585.2 666.3,585.2 678.1,585.2 690.0,585.2 701.9,585.2" fill="none" stroke="#2a32b8" stroke-width="1.8"/>
<circle cx="85.5" cy="595.1" r="2.8" fill="#2a32b8"/>
<circle cx="97.4" cy="594.8" r="2.8" fill="#2a32b8"/>
<circle cx="109.2" cy="594.6" r="2.8" fill="#2a32b8"/>
<circle cx="121.1" cy="594.3" r="2.8" fill="#2a32b8"/>
<circle cx="132.9" cy="594.2" r="2.8" fill="#2a32b8"/>
<circle cx="144.8" cy="594.1" r="2.8" fill="#2a32b8"/>
<circle cx="156.6" cy="594.1" r="2.8" fill="#2a32b8"/>
<circle cx="168.5" cy="594.0" r="2.8" fill="#2a32b8"/>
<circle cx="180.3" cy="594.0" r="2.8" fill="#2a32b8"/>
<circle cx="192.2" cy="593.9" r="2.8" fill="#2a32b8"/>
<circle cx="204.0" cy="593.8" r="2.8" fill="#2a32b8"/>
<circle cx="215.9" cy="593.8" r="2.8" fill="#2a32b8"/>
<circle cx="227.7" cy="593.7" r="2.8" fill="#2a32b8"/>
<circle cx="239.6" cy="593.6" r="2.8" fill="#2a32b8"/>
<circle cx="251.4" cy="593.6" r="2.8" fill="#2a32b8"/>
<circle cx="263.3" cy="593.5" r="2.8" fill="#2a32b8"/>
<circle cx="275.1" cy="593.5" r="2.8" fill="#2a32b8"/>
<circle cx="287.0" cy="593.4" r="2.8" fill="#2a32b8"/>
<circle cx="298.9" cy="593.3" r="2.8" fill="#2a32b8"/>
<circle cx="310.7" cy="593.2" r="2.8" fill="#2a32b8"/>
<circle cx="322.6" cy="593.1" r="2.8" fill="#2a32b8"/>
<circle cx="334.4" cy="593.0" r="2.8" fill="#2a32b8"/>
<circle cx="346.3" cy="592.9" r="2.8" fill="#2a32b8"/>
<circle cx="358.1" cy="592.8" r="2.8" fill="#2a32b8"/>
<circle cx="370.0" cy="592.7" r="2.8" fill="#2a32b8"/>
<circle cx="381.8" cy="592.6" r="2.8" fill="#2a32b8"/>
<circle cx="393.7" cy="592.5" r="2.8" fill="#2a32b8"/>
<circle cx="405.5" cy="592.5" r="2.8" fill="#2a32b8"/>
<circle cx="417.4" cy="592.4" r="2.8" fill="#2a32b8"/>
<circle cx="429.2" cy="592.3" r="2.8" fill="#2a32b8"/>
<circle cx="441.1" cy="592.2" r="2.8" fill="#2a32b8"/>
<circle cx="452.9" cy="592.1" r="2.8" fill="#2a32b8"/>
<circle cx="464.8" cy="592.0" r="2.8" fill="#2a32b8"/>
<circle cx="476.6" cy="591.9" r="2.8" fill="#2a32b8"/>
<circle cx="488.5" cy="589.8" r="2.8" fill="#2a32b8"/>
<circle cx="500.4" cy="589.8" r="2.8" fill="#2a32b8"/>
<circle cx="512.2" cy="589.8" r="2.8" fill="#2a32b8"/>
<circle cx="524.1" cy="589.8" r="2.8" fill="#2a32b8"/>
<circle cx="535.9" cy="588.1" r="2.8" fill="#2a32b8"/>
<circle cx="547.8" cy="587.0" r="2.8" fill="#2a32b8"/>
<circle cx="559.6" cy="586.5" r="2.8" fill="#2a32b8"/>
<circle cx="571.5" cy="585.7" r="2.8" fill="#2a32b8"/>
<circle cx="583.3" cy="585.2" r="2.8" fill="#2a32b8"/>
<circle cx="595.2" cy="585.2" r="2.8" fill="#2a32b8"/>
<circle cx="607.0" cy="585.2" r="2.8" fill="#2a32b8"/>
<circle cx="618.9" cy="585.2" r="2.8" fill="#2a32b8"/>
<circle cx="630.7" cy="585.2" r="2.8" fill="#2a32b8"/>
<circle cx="642.6" cy="585.2" r="2.8" fill="#2a32b8"/>
<circle cx="654.4" cy="585.2" r="2.8" fill="#2a32b8"/>
<circle cx="666.3" cy="585.2" r="2.8" fill="#2a32b8"/>
<circle cx="678.1" cy="585.2" r="2.8" fill="#2a32b8"/>
<circle cx="690.0" cy="585.2" r="2.8" fill="#2a32b8"/>
<circle cx="701.9" cy="585.2" r="2.8" fill="#2a32b8"/>
<polyline points="85.5,595.1 97.4,591.3 109.2,588.2 121.1,584.9 132.9,581.3 144.8,574.5 156.6,569.6 168.5,566.5 180.3,564.5 192.2,562.9 204.0,561.5 215.9,559.8 227.7,558.7 239.6,556.8 251.4,554.7 263.3,553.5 275.1,551.9 287.0,550.6 298.9,549.5 310.7,547.8 322.6,546.6 334.4,545.4 346.3,544.6 358.1,544.1 370.0,543.0 381.8,538.2 393.7,530.9 405.5,525.3 417.4,520.0 429.2,516.9 441.1,513.6 452.9,508.4 464.8,502.0 476.6,498.3 488.5,473.6 500.4,457.5 512.2,443.9 524.1,435.1 535.9,421.4 547.8,408.1 559.6,399.9 571.5,391.4 583.3,386.1 595.2,376.4 607.0,369.0 618.9,363.1 630.7,357.4 642.6,347.9 654.4,336.2 666.3,334.7 678.1,334.7 690.0,334.7 701.9,334.7" fill="none" stroke="#7a8898" stroke-width="1.8"/>
<circle cx="85.5" cy="595.1" r="2.8" fill="#7a8898"/>
<circle cx="97.4" cy="591.3" r="2.8" fill="#7a8898"/>
<circle cx="109.2" cy="588.2" r="2.8" fill="#7a8898"/>
<circle cx="121.1" cy="584.9" r="2.8" fill="#7a8898"/>
<circle cx="132.9" cy="581.3" r="2.8" fill="#7a8898"/>
<circle cx="144.8" cy="574.5" r="2.8" fill="#7a8898"/>
<circle cx="156.6" cy="569.6" r="2.8" fill="#7a8898"/>
<circle cx="168.5" cy="566.5" r="2.8" fill="#7a8898"/>
<circle cx="180.3" cy="564.5" r="2.8" fill="#7a8898"/>
<circle cx="192.2" cy="562.9" r="2.8" fill="#7a8898"/>
<circle cx="204.0" cy="561.5" r="2.8" fill="#7a8898"/>
<circle cx="215.9" cy="559.8" r="2.8" fill="#7a8898"/>
<circle cx="227.7" cy="558.7" r="2.8" fill="#7a8898"/>
<circle cx="239.6" cy="556.8" r="2.8" fill="#7a8898"/>
<circle cx="251.4" cy="554.7" r="2.8" fill="#7a8898"/>
<circle cx="263.3" cy="553.5" r="2.8" fill="#7a8898"/>
<circle cx="275.1" cy="551.9" r="2.8" fill="#7a8898"/>
<circle cx="287.0" cy="550.6" r="2.8" fill="#7a8898"/>
<circle cx="298.9" cy="549.5" r="2.8" fill="#7a8898"/>
<circle cx="310.7" cy="547.8" r="2.8" fill="#7a8898"/>
<circle cx="322.6" cy="546.6" r="2.8" fill="#7a8898"/>
<circle cx="334.4" cy="545.4" r="2.8" fill="#7a8898"/>
<circle cx="346.3" cy="544.6" r="2.8" fill="#7a8898"/>
<circle cx="358.1" cy="544.1" r="2.8" fill="#7a8898"/>
<circle cx="370.0" cy="543.0" r="2.8" fill="#7a8898"/>
<circle cx="381.8" cy="538.2" r="2.8" fill="#7a8898"/>
<circle cx="393.7" cy="530.9" r="2.8" fill="#7a8898"/>
<circle cx="405.5" cy="525.3" r="2.8" fill="#7a8898"/>
<circle cx="417.4" cy="520.0" r="2.8" fill="#7a8898"/>
<circle cx="429.2" cy="516.9" r="2.8" fill="#7a8898"/>
<circle cx="441.1" cy="513.6" r="2.8" fill="#7a8898"/>
<circle cx="452.9" cy="508.4" r="2.8" fill="#7a8898"/>
<circle cx="464.8" cy="502.0" r="2.8" fill="#7a8898"/>
<circle cx="476.6" cy="498.3" r="2.8" fill="#7a8898"/>
<circle cx="488.5" cy="473.6" r="2.8" fill="#7a8898"/>
<circle cx="500.4" cy="457.5" r="2.8" fill="#7a8898"/>
<circle cx="512.2" cy="443.9" r="2.8" fill="#7a8898"/>
<circle cx="524.1" cy="435.1" r="2.8" fill="#7a8898"/>
<circle cx="535.9" cy="421.4" r="2.8" fill="#7a8898"/>
<circle cx="547.8" cy="408.1" r="2.8" fill="#7a8898"/>
<circle cx="559.6" cy="399.9" r="2.8" fill="#7a8898"/>
<circle cx="571.5" cy="391.4" r="2.8" fill="#7a8898"/>
<circle cx="583.3" cy="386.1" r="2.8" fill="#7a8898"/>
<circle cx="595.2" cy="376.4" r="2.8" fill="#7a8898"/>
<circle cx="607.0" cy="369.0" r="2.8" fill="#7a8898"/>
<circle cx="618.9" cy="363.1" r="2.8" fill="#7a8898"/>
<circle cx="630.7" cy="357.4" r="2.8" fill="#7a8898"/>
<circle cx="642.6" cy="347.9" r="2.8" fill="#7a8898"/>
<circle cx="654.4" cy="336.2" r="2.8" fill="#7a8898"/>
<circle cx="666.3" cy="334.7" r="2.8" fill="#7a8898"/>
<circle cx="678.1" cy="334.7" r="2.8" fill="#7a8898"/>
<circle cx="690.0" cy="334.7" r="2.8" fill="#7a8898"/>
<circle cx="701.9" cy="334.7" r="2.8" fill="#7a8898"/>
<polyline points="654.4,595.1 666.3,595.1 678.1,595.1 690.0,595.1 701.9,595.1" fill="none" stroke="#4a6ee0" stroke-width="1.8"/>
<circle cx="654.4" cy="595.1" r="2.8" fill="#4a6ee0"/>
<circle cx="666.3" cy="595.1" r="2.8" fill="#4a6ee0"/>
<circle cx="678.1" cy="595.1" r="2.8" fill="#4a6ee0"/>
<circle cx="690.0" cy="595.1" r="2.8" fill="#4a6ee0"/>
<circle cx="701.9" cy="595.1" r="2.8" fill="#4a6ee0"/>
<polyline points="85.5,595.1 97.4,595.0 109.2,594.9 121.1,594.7 132.9,594.6 144.8,594.5 156.6,594.4 168.5,594.2 180.3,594.1 192.2,594.0 204.0,593.9 215.9,593.9 227.7,593.8 239.6,593.7 251.4,593.7 263.3,593.6 275.1,593.5 287.0,593.5 298.9,593.4 310.7,593.3 322.6,593.2 334.4,593.2 346.3,593.1 358.1,593.0 370.0,593.0 381.8,592.9 393.7,592.8 405.5,592.8 417.4,592.7 429.2,592.6 441.1,592.6 452.9,592.5 464.8,592.4 476.6,592.4 488.5,591.9 500.4,591.5 512.2,591.5 524.1,591.5 535.9,591.4 547.8,591.4 559.6,591.4 571.5,591.3 583.3,591.3 595.2,591.3 607.0,591.2 618.9,591.2 630.7,591.2 642.6,591.1 654.4,591.1 666.3,591.1 678.1,591.0 690.0,591.0 701.9,591.0" fill="none" stroke="#a6d246" stroke-width="1.8"/>
<circle cx="85.5" cy="595.1" r="2.8" fill="#a6d246"/>
<circle cx="97.4" cy="595.0" r="2.8" fill="#a6d246"/>
<circle cx="109.2" cy="594.9" r="2.8" fill="#a6d246"/>
<circle cx="121.1" cy="594.7" r="2.8" fill="#a6d246"/>
<circle cx="132.9" cy="594.6" r="2.8" fill="#a6d246"/>
<circle cx="144.8" cy="594.5" r="2.8" fill="#a6d246"/>
<circle cx="156.6" cy="594.4" r="2.8" fill="#a6d246"/>
<circle cx="168.5" cy="594.2" r="2.8" fill="#a6d246"/>
<circle cx="180.3" cy="594.1" r="2.8" fill="#a6d246"/>
<circle cx="192.2" cy="594.0" r="2.8" fill="#a6d246"/>
<circle cx="204.0" cy="593.9" r="2.8" fill="#a6d246"/>
<circle cx="215.9" cy="593.9" r="2.8" fill="#a6d246"/>
<circle cx="227.7" cy="593.8" r="2.8" fill="#a6d246"/>
<circle cx="239.6" cy="593.7" r="2.8" fill="#a6d246"/>
<circle cx="251.4" cy="593.7" r="2.8" fill="#a6d246"/>
<circle cx="263.3" cy="593.6" r="2.8" fill="#a6d246"/>
<circle cx="275.1" cy="593.5" r="2.8" fill="#a6d246"/>
<circle cx="287.0" cy="593.5" r="2.8" fill="#a6d246"/>
<circle cx="298.9" cy="593.4" r="2.8" fill="#a6d246"/>
<circle cx="310.7" cy="593.3" r="2.8" fill="#a6d246"/>
<circle cx="322.6" cy="593.2" r="2.8" fill="#a6d246"/>
<circle cx="334.4" cy="593.2" r="2.8" fill="#a6d246"/>
<circle cx="346.3" cy="593.1" r="2.8" fill="#a6d246"/>
<circle cx="358.1" cy="593.0" r="2.8" fill="#a6d246"/>
<circle cx="370.0" cy="593.0" r="2.8" fill="#a6d246"/>
<circle cx="381.8" cy="592.9" r="2.8" fill="#a6d246"/>
<circle cx="393.7" cy="592.8" r="2.8" fill="#a6d246"/>
<circle cx="405.5" cy="592.8" r="2.8" fill="#a6d246"/>
<circle cx="417.4" cy="592.7" r="2.8" fill="#a6d246"/>
<circle cx="429.2" cy="592.6" r="2.8" fill="#a6d246"/>
<circle cx="441.1" cy="592.6" r="2.8" fill="#a6d246"/>
<circle cx="452.9" cy="592.5" r="2.8" fill="#a6d246"/>
<circle cx="464.8" cy="592.4" r="2.8" fill="#a6d246"/>
<circle cx="476.6" cy="592.4" r="2.8" fill="#a6d246"/>
<circle cx="488.5" cy="591.9" r="2.8" fill="#a6d246"/>
<circle cx="500.4" cy="591.5" r="2.8" fill="#a6d246"/>
<circle cx="512.2" cy="591.5" r="2.8" fill="#a6d246"/>
<circle cx="524.1" cy="591.5" r="2.8" fill="#a6d246"/>
<circle cx="535.9" cy="591.4" r="2.8" fill="#a6d246"/>
<circle cx="547.8" cy="591.4" r="2.8" fill="#a6d246"/>
<circle cx="559.6" cy="591.4" r="2.8" fill="#a6d246"/>
<circle cx="571.5" cy="591.3" r="2.8" fill="#a6d246"/>
<circle cx="583.3" cy="591.3" r="2.8" fill="#a6d246"/>
<circle cx="595.2" cy="591.3" r="2.8" fill="#a6d246"/>
<circle cx="607.0" cy="591.2" r="2.8" fill="#a6d246"/>
<circle cx="618.9" cy="591.2" r="2.8" fill="#a6d246"/>
<circle cx="630.7" cy="591.2" r="2.8" fill="#a6d246"/>
<circle cx="642.6" cy="591.1" r="2.8" fill="#a6d246"/>
<circle cx="654.4" cy="591.1" r="2.8" fill="#a6d246"/>
<circle cx="666.3" cy="591.1" r="2.8" fill="#a6d246"/>
<circle cx="678.1" cy="591.0" r="2.8" fill="#a6d246"/>
<circle cx="690.0" cy="591.0" r="2.8" fill="#a6d246"/>
<circle cx="701.9" cy="591.0" r="2.8" fill="#a6d246"/>
<polyline points="85.5,595.1 97.4,594.7 109.2,594.4 121.1,594.2 132.9,594.0 144.8,593.8 156.6,593.6 168.5,593.4 180.3,593.2 192.2,593.0 204.0,592.8 215.9,592.7 227.7,592.6 239.6,592.4 251.4,592.3 263.3,592.2 275.1,592.0 287.0,591.8 298.9,591.6 310.7,591.4 322.6,591.2 334.4,591.0 346.3,590.8 358.1,590.6 370.0,590.4 381.8,590.2 393.7,590.0 405.5,589.8 417.4,589.6 429.2,589.4 441.1,589.2 452.9,589.0 464.8,588.8 476.6,588.1 488.5,580.9 500.4,578.5 512.2,576.9 524.1,575.7 535.9,574.1 547.8,571.7 559.6,568.5 571.5,567.2 583.3,566.7 595.2,565.3 607.0,564.0 618.9,563.2 630.7,562.5 642.6,561.7 654.4,560.4 666.3,560.4 678.1,560.4 690.0,560.4 701.9,560.4" fill="none" stroke="#f08858" stroke-width="1.8"/>
<circle cx="85.5" cy="595.1" r="2.8" fill="#f08858"/>
<circle cx="97.4" cy="594.7" r="2.8" fill="#f08858"/>
<circle cx="109.2" cy="594.4" r="2.8" fill="#f08858"/>
<circle cx="121.1" cy="594.2" r="2.8" fill="#f08858"/>
<circle cx="132.9" cy="594.0" r="2.8" fill="#f08858"/>
<circle cx="144.8" cy="593.8" r="2.8" fill="#f08858"/>
<circle cx="156.6" cy="593.6" r="2.8" fill="#f08858"/>
<circle cx="168.5" cy="593.4" r="2.8" fill="#f08858"/>
<circle cx="180.3" cy="593.2" r="2.8" fill="#f08858"/>
<circle cx="192.2" cy="593.0" r="2.8" fill="#f08858"/>
<circle cx="204.0" cy="592.8" r="2.8" fill="#f08858"/>
<circle cx="215.9" cy="592.7" r="2.8" fill="#f08858"/>
<circle cx="227.7" cy="592.6" r="2.8" fill="#f08858"/>
<circle cx="239.6" cy="592.4" r="2.8" fill="#f08858"/>
<circle cx="251.4" cy="592.3" r="2.8" fill="#f08858"/>
<circle cx="263.3" cy="592.2" r="2.8" fill="#f08858"/>
<circle cx="275.1" cy="592.0" r="2.8" fill="#f08858"/>
<circle cx="287.0" cy="591.8" r="2.8" fill="#f08858"/>
<circle cx="298.9" cy="591.6" r="2.8" fill="#f08858"/>
<circle cx="310.7" cy="591.4" r="2.8" fill="#f08858"/>
<circle cx="322.6" cy="591.2" r="2.8" fill="#f08858"/>
<circle cx="334.4" cy="591.0" r="2.8" fill="#f08858"/>
<circle cx="346.3" cy="590.8" r="2.8" fill="#f08858"/>
<circle cx="358.1" cy="590.6" r="2.8" fill="#f08858"/>
<circle cx="370.0" cy="590.4" r="2.8" fill="#f08858"/>
<circle cx="381.8" cy="590.2" r="2.8" fill="#f08858"/>
<circle cx="393.7" cy="590.0" r="2.8" fill="#f08858"/>
<circle cx="405.5" cy="589.8" r="2.8" fill="#f08858"/>
<circle cx="417.4" cy="589.6" r="2.8" fill="#f08858"/>
<circle cx="429.2" cy="589.4" r="2.8" fill="#f08858"/>
<circle cx="441.1" cy="589.2" r="2.8" fill="#f08858"/>
<circle cx="452.9" cy="589.0" r="2.8" fill="#f08858"/>
<circle cx="464.8" cy="588.8" r="2.8" fill="#f08858"/>
<circle cx="476.6" cy="588.1" r="2.8" fill="#f08858"/>
<circle cx="488.5" cy="580.9" r="2.8" fill="#f08858"/>
<circle cx="500.4" cy="578.5" r="2.8" fill="#f08858"/>
<circle cx="512.2" cy="576.9" r="2.8" fill="#f08858"/>
<circle cx="524.1" cy="575.7" r="2.8" fill="#f08858"/>
<circle cx="535.9" cy="574.1" r="2.8" fill="#f08858"/>
<circle cx="547.8" cy="571.7" r="2.8" fill="#f08858"/>
<circle cx="559.6" cy="568.5" r="2.8" fill="#f08858"/>
<circle cx="571.5" cy="567.2" r="2.8" fill="#f08858"/>
<circle cx="583.3" cy="566.7" r="2.8" fill="#f08858"/>
<circle cx="595.2" cy="565.3" r="2.8" fill="#f08858"/>
<circle cx="607.0" cy="564.0" r="2.8" fill="#f08858"/>
<circle cx="618.9" cy="563.2" r="2.8" fill="#f08858"/>
<circle cx="630.7" cy="562.5" r="2.8" fill="#f08858"/>
<circle cx="642.6" cy="561.7" r="2.8" fill="#f08858"/>
<circle cx="654.4" cy="560.4" r="2.8" fill="#f08858"/>
<circle cx="666.3" cy="560.4" r="2.8" fill="#f08858"/>
<circle cx="678.1" cy="560.4" r="2.8" fill="#f08858"/>
<circle cx="690.0" cy="560.4" r="2.8" fill="#f08858"/>
<circle cx="701.9" cy="560.4" r="2.8" fill="#f08858"/>
<polyline points="85.5,595.1 97.4,594.8 109.2,594.6 121.1,594.4 132.9,594.2 144.8,594.1 156.6,594.1 168.5,594.0 180.3,594.0 192.2,594.0 204.0,593.9 215.9,593.9 227.7,593.9 239.6,593.8 251.4,593.8 263.3,593.7 275.1,593.7 287.0,593.6 298.9,593.5 310.7,593.4 322.6,593.3 334.4,593.2 346.3,593.1 358.1,593.0 370.0,592.9 381.8,592.6 393.7,592.2 405.5,591.9 417.4,591.5 429.2,591.2 441.1,590.8 452.9,590.5 464.8,590.1 476.6,589.8 488.5,588.1 500.4,587.3 512.2,586.5 524.1,585.7 535.9,584.1 547.8,582.5 559.6,581.2 571.5,580.6 583.3,579.3 595.2,579.3 607.0,579.3 618.9,579.3 630.7,579.3 642.6,579.3 654.4,579.3 666.3,579.3 678.1,579.3 690.0,579.3 701.9,579.3" fill="none" stroke="#8a4a1e" stroke-width="1.8"/>
<circle cx="85.5" cy="595.1" r="2.8" fill="#8a4a1e"/>
<circle cx="97.4" cy="594.8" r="2.8" fill="#8a4a1e"/>
<circle cx="109.2" cy="594.6" r="2.8" fill="#8a4a1e"/>
<circle cx="121.1" cy="594.4" r="2.8" fill="#8a4a1e"/>
<circle cx="132.9" cy="594.2" r="2.8" fill="#8a4a1e"/>
<circle cx="144.8" cy="594.1" r="2.8" fill="#8a4a1e"/>
<circle cx="156.6" cy="594.1" r="2.8" fill="#8a4a1e"/>
<circle cx="168.5" cy="594.0" r="2.8" fill="#8a4a1e"/>
<circle cx="180.3" cy="594.0" r="2.8" fill="#8a4a1e"/>
<circle cx="192.2" cy="594.0" r="2.8" fill="#8a4a1e"/>
<circle cx="204.0" cy="593.9" r="2.8" fill="#8a4a1e"/>
<circle cx="215.9" cy="593.9" r="2.8" fill="#8a4a1e"/>
<circle cx="227.7" cy="593.9" r="2.8" fill="#8a4a1e"/>
<circle cx="239.6" cy="593.8" r="2.8" fill="#8a4a1e"/>
<circle cx="251.4" cy="593.8" r="2.8" fill="#8a4a1e"/>
<circle cx="263.3" cy="593.7" r="2.8" fill="#8a4a1e"/>
<circle cx="275.1" cy="593.7" r="2.8" fill="#8a4a1e"/>
<circle cx="287.0" cy="593.6" r="2.8" fill="#8a4a1e"/>
<circle cx="298.9" cy="593.5" r="2.8" fill="#8a4a1e"/>
<circle cx="310.7" cy="593.4" r="2.8" fill="#8a4a1e"/>
<circle cx="322.6" cy="593.3" r="2.8" fill="#8a4a1e"/>
<circle cx="334.4" cy="593.2" r="2.8" fill="#8a4a1e"/>
<circle cx="346.3" cy="593.1" r="2.8" fill="#8a4a1e"/>
<circle cx="358.1" cy="593.0" r="2.8" fill="#8a4a1e"/>
<circle cx="370.0" cy="592.9" r="2.8" fill="#8a4a1e"/>
<circle cx="381.8" cy="592.6" r="2.8" fill="#8a4a1e"/>
<circle cx="393.7" cy="592.2" r="2.8" fill="#8a4a1e"/>
<circle cx="405.5" cy="591.9" r="2.8" fill="#8a4a1e"/>
<circle cx="417.4" cy="591.5" r="2.8" fill="#8a4a1e"/>
<circle cx="429.2" cy="591.2" r="2.8" fill="#8a4a1e"/>
<circle cx="441.1" cy="590.8" r="2.8" fill="#8a4a1e"/>
<circle cx="452.9" cy="590.5" r="2.8" fill="#8a4a1e"/>
<circle cx="464.8" cy="590.1" r="2.8" fill="#8a4a1e"/>
<circle cx="476.6" cy="589.8" r="2.8" fill="#8a4a1e"/>
<circle cx="488.5" cy="588.1" r="2.8" fill="#8a4a1e"/>
<circle cx="500.4" cy="587.3" r="2.8" fill="#8a4a1e"/>
<circle cx="512.2" cy="586.5" r="2.8" fill="#8a4a1e"/>
<circle cx="524.1" cy="585.7" r="2.8" fill="#8a4a1e"/>
<circle cx="535.9" cy="584.1" r="2.8" fill="#8a4a1e"/>
<circle cx="547.8" cy="582.5" r="2.8" fill="#8a4a1e"/>
<circle cx="559.6" cy="581.2" r="2.8" fill="#8a4a1e"/>
<circle cx="571.5" cy="580.6" r="2.8" fill="#8a4a1e"/>
<circle cx="583.3" cy="579.3" r="2.8" fill="#8a4a1e"/>
<circle cx="595.2" cy="579.3" r="2.8" fill="#8a4a1e"/>
<circle cx="607.0" cy="579.3" r="2.8" fill="#8a4a1e"/>
<circle cx="618.9" cy="579.3" r="2.8" fill="#8a4a1e"/>
<circle cx="630.7" cy="579.3" r="2.8" fill="#8a4a1e"/>
<circle cx="642.6" cy="579.3" r="2.8" fill="#8a4a1e"/>
<circle cx="654.4" cy="579.3" r="2.8" fill="#8a4a1e"/>
<circle cx="666.3" cy="579.3" r="2.8" fill="#8a4a1e"/>
<circle cx="678.1" cy="579.3" r="2.8" fill="#8a4a1e"/>
<circle cx="690.0" cy="579.3" r="2.8" fill="#8a4a1e"/>
<circle cx="701.9" cy="579.3" r="2.8" fill="#8a4a1e"/>
<polyline points="85.5,595.1 97.4,594.6 109.2,594.0 121.1,593.4 132.9,593.0 144.8,592.5 156.6,592.1 168.5,591.9 180.3,591.7 192.2,591.5 204.0,591.4 215.9,591.4 227.7,591.4 239.6,591.3 251.4,591.3 263.3,591.3 275.1,591.3 287.0,590.9 298.9,590.5 310.7,590.2 322.6,589.8 334.4,589.5 346.3,589.1 358.1,588.8 370.0,587.4 381.8,586.2 393.7,582.0 405.5,579.7 417.4,577.1 429.2,573.2 441.1,570.4 452.9,568.1 464.8,565.9 476.6,564.5 488.5,558.4 500.4,555.1 512.2,552.0 524.1,550.1 535.9,544.5 547.8,541.6 559.6,538.8 571.5,536.4 583.3,535.4 595.2,534.3 607.0,533.5 618.9,532.4 630.7,531.6 642.6,531.1 654.4,530.6 666.3,530.6 678.1,530.6 690.0,530.6 701.9,530.6" fill="none" stroke="#d07898" stroke-width="1.8"/>
<circle cx="85.5" cy="595.1" r="2.8" fill="#d07898"/>
<circle cx="97.4" cy="594.6" r="2.8" fill="#d07898"/>
<circle cx="109.2" cy="594.0" r="2.8" fill="#d07898"/>
<circle cx="121.1" cy="593.4" r="2.8" fill="#d07898"/>
<circle cx="132.9" cy="593.0" r="2.8" fill="#d07898"/>
<circle cx="144.8" cy="592.5" r="2.8" fill="#d07898"/>
<circle cx="156.6" cy="592.1" r="2.8" fill="#d07898"/>
<circle cx="168.5" cy="591.9" r="2.8" fill="#d07898"/>
<circle cx="180.3" cy="591.7" r="2.8" fill="#d07898"/>
<circle cx="192.2" cy="591.5" r="2.8" fill="#d07898"/>
<circle cx="204.0" cy="591.4" r="2.8" fill="#d07898"/>
<circle cx="215.9" cy="591.4" r="2.8" fill="#d07898"/>
<circle cx="227.7" cy="591.4" r="2.8" fill="#d07898"/>
<circle cx="239.6" cy="591.3" r="2.8" fill="#d07898"/>
<circle cx="251.4" cy="591.3" r="2.8" fill="#d07898"/>
<circle cx="263.3" cy="591.3" r="2.8" fill="#d07898"/>
<circle cx="275.1" cy="591.3" r="2.8" fill="#d07898"/>
<circle cx="287.0" cy="590.9" r="2.8" fill="#d07898"/>
<circle cx="298.9" cy="590.5" r="2.8" fill="#d07898"/>
<circle cx="310.7" cy="590.2" r="2.8" fill="#d07898"/>
<circle cx="322.6" cy="589.8" r="2.8" fill="#d07898"/>
<circle cx="334.4" cy="589.5" r="2.8" fill="#d07898"/>
<circle cx="346.3" cy="589.1" r="2.8" fill="#d07898"/>
<circle cx="358.1" cy="588.8" r="2.8" fill="#d07898"/>
<circle cx="370.0" cy="587.4" r="2.8" fill="#d07898"/>
<circle cx="381.8" cy="586.2" r="2.8" fill="#d07898"/>
<circle cx="393.7" cy="582.0" r="2.8" fill="#d07898"/>
<circle cx="405.5" cy="579.7" r="2.8" fill="#d07898"/>
<circle cx="417.4" cy="577.1" r="2.8" fill="#d07898"/>
<circle cx="429.2" cy="573.2" r="2.8" fill="#d07898"/>
<circle cx="441.1" cy="570.4" r="2.8" fill="#d07898"/>
<circle cx="452.9" cy="568.1" r="2.8" fill="#d07898"/>
<circle cx="464.8" cy="565.9" r="2.8" fill="#d07898"/>
<circle cx="476.6" cy="564.5" r="2.8" fill="#d07898"/>
<circle cx="488.5" cy="558.4" r="2.8" fill="#d07898"/>
<circle cx="500.4" cy="555.1" r="2.8" fill="#d07898"/>
<circle cx="512.2" cy="552.0" r="2.8" fill="#d07898"/>
<circle cx="524.1" cy="550.1" r="2.8" fill="#d07898"/>
<circle cx="535.9" cy="544.5" r="2.8" fill="#d07898"/>
<circle cx="547.8" cy="541.6" r="2.8" fill="#d07898"/>
<circle cx="559.6" cy="538.8" r="2.8" fill="#d07898"/>
<circle cx="571.5" cy="536.4" r="2.8" fill="#d07898"/>
<circle cx="583.3" cy="535.4" r="2.8" fill="#d07898"/>
<circle cx="595.2" cy="534.3" r="2.8" fill="#d07898"/>
<circle cx="607.0" cy="533.5" r="2.8" fill="#d07898"/>
<circle cx="618.9" cy="532.4" r="2.8" fill="#d07898"/>
<circle cx="630.7" cy="531.6" r="2.8" fill="#d07898"/>
<circle cx="642.6" cy="531.1" r="2.8" fill="#d07898"/>
<circle cx="654.4" cy="530.6" r="2.8" fill="#d07898"/>
<circle cx="666.3" cy="530.6" r="2.8" fill="#d07898"/>
<circle cx="678.1" cy="530.6" r="2.8" fill="#d07898"/>
<circle cx="690.0" cy="530.6" r="2.8" fill="#d07898"/>
<circle cx="701.9" cy="530.6" r="2.8" fill="#d07898"/>
<polyline points="85.5,595.1 97.4,594.7 109.2,594.3 121.1,593.9 132.9,593.5 144.8,593.3 156.6,593.1 168.5,592.8 180.3,592.6 192.2,592.4 204.0,592.3 215.9,592.1 227.7,592.0 239.6,591.9 251.4,591.7 263.3,591.6 275.1,591.5 287.0,591.4 298.9,591.2 310.7,591.1 322.6,591.0 334.4,590.9 346.3,590.8 358.1,590.6 370.0,590.5 381.8,590.4 393.7,590.3 405.5,590.2 417.4,590.1 429.2,589.9 441.1,589.8 452.9,589.7 464.8,589.6 476.6,588.9 488.5,584.1 500.4,581.2 512.2,579.8 524.1,579.0 535.9,578.2 547.8,576.9 559.6,576.1 571.5,575.3 583.3,574.9 595.2,574.7 607.0,574.4 618.9,574.2 630.7,574.0 642.6,573.7 654.4,572.5 666.3,572.5 678.1,572.5 690.0,572.5 701.9,572.5" fill="none" stroke="#7b2fe0" stroke-width="1.8"/>
<circle cx="85.5" cy="595.1" r="2.8" fill="#7b2fe0"/>
<circle cx="97.4" cy="594.7" r="2.8" fill="#7b2fe0"/>
<circle cx="109.2" cy="594.3" r="2.8" fill="#7b2fe0"/>
<circle cx="121.1" cy="593.9" r="2.8" fill="#7b2fe0"/>
<circle cx="132.9" cy="593.5" r="2.8" fill="#7b2fe0"/>
<circle cx="144.8" cy="593.3" r="2.8" fill="#7b2fe0"/>
<circle cx="156.6" cy="593.1" r="2.8" fill="#7b2fe0"/>
<circle cx="168.5" cy="592.8" r="2.8" fill="#7b2fe0"/>
<circle cx="180.3" cy="592.6" r="2.8" fill="#7b2fe0"/>
<circle cx="192.2" cy="592.4" r="2.8" fill="#7b2fe0"/>
<circle cx="204.0" cy="592.3" r="2.8" fill="#7b2fe0"/>
<circle cx="215.9" cy="592.1" r="2.8" fill="#7b2fe0"/>
<circle cx="227.7" cy="592.0" r="2.8" fill="#7b2fe0"/>
<circle cx="239.6" cy="591.9" r="2.8" fill="#7b2fe0"/>
<circle cx="251.4" cy="591.7" r="2.8" fill="#7b2fe0"/>
<circle cx="263.3" cy="591.6" r="2.8" fill="#7b2fe0"/>
<circle cx="275.1" cy="591.5" r="2.8" fill="#7b2fe0"/>
<circle cx="287.0" cy="591.4" r="2.8" fill="#7b2fe0"/>
<circle cx="298.9" cy="591.2" r="2.8" fill="#7b2fe0"/>
<circle cx="310.7" cy="591.1" r="2.8" fill="#7b2fe0"/>
<circle cx="322.6" cy="591.0" r="2.8" fill="#7b2fe0"/>
<circle cx="334.4" cy="590.9" r="2.8" fill="#7b2fe0"/>
<circle cx="346.3" cy="590.8" r="2.8" fill="#7b2fe0"/>
<circle cx="358.1" cy="590.6" r="2.8" fill="#7b2fe0"/>
<circle cx="370.0" cy="590.5" r="2.8" fill="#7b2fe0"/>
<circle cx="381.8" cy="590.4" r="2.8" fill="#7b2fe0"/>
<circle cx="393.7" cy="590.3" r="2.8" fill="#7b2fe0"/>
<circle cx="405.5" cy="590.2" r="2.8" fill="#7b2fe0"/>
<circle cx="417.4" cy="590.1" r="2.8" fill="#7b2fe0"/>
<circle cx="429.2" cy="589.9" r="2.8" fill="#7b2fe0"/>
<circle cx="441.1" cy="589.8" r="2.8" fill="#7b2fe0"/>
<circle cx="452.9" cy="589.7" r="2.8" fill="#7b2fe0"/>
<circle cx="464.8" cy="589.6" r="2.8" fill="#7b2fe0"/>
<circle cx="476.6" cy="588.9" r="2.8" fill="#7b2fe0"/>
<circle cx="488.5" cy="584.1" r="2.8" fill="#7b2fe0"/>
<circle cx="500.4" cy="581.2" r="2.8" fill="#7b2fe0"/>
<circle cx="512.2" cy="579.8" r="2.8" fill="#7b2fe0"/>
<circle cx="524.1" cy="579.0" r="2.8" fill="#7b2fe0"/>
<circle cx="535.9" cy="578.2" r="2.8" fill="#7b2fe0"/>
<circle cx="547.8" cy="576.9" r="2.8" fill="#7b2fe0"/>
<circle cx="559.6" cy="576.1" r="2.8" fill="#7b2fe0"/>
<circle cx="571.5" cy="575.3" r="2.8" fill="#7b2fe0"/>
<circle cx="583.3" cy="574.9" r="2.8" fill="#7b2fe0"/>
<circle cx="595.2" cy="574.7" r="2.8" fill="#7b2fe0"/>
<circle cx="607.0" cy="574.4" r="2.8" fill="#7b2fe0"/>
<circle cx="618.9" cy="574.2" r="2.8" fill="#7b2fe0"/>
<circle cx="630.7" cy="574.0" r="2.8" fill="#7b2fe0"/>
<circle cx="642.6" cy="573.7" r="2.8" fill="#7b2fe0"/>
<circle cx="654.4" cy="572.5" r="2.8" fill="#7b2fe0"/>
<circle cx="666.3" cy="572.5" r="2.8" fill="#7b2fe0"/>
<circle cx="678.1" cy="572.5" r="2.8" fill="#7b2fe0"/>
<circle cx="690.0" cy="572.5" r="2.8" fill="#7b2fe0"/>
<circle cx="701.9" cy="572.5" r="2.8" fill="#7b2fe0"/>
<polyline points="85.5,595.1 97.4,587.1 109.2,578.6 121.1,570.6 132.9,564.5 144.8,559.2 156.6,555.4 168.5,552.7 180.3,550.1 192.2,547.6 204.0,545.4 215.9,544.1 227.7,542.4 239.6,541.1 251.4,539.7 263.3,538.0 275.1,536.8 287.0,535.0 298.9,534.2 310.7,533.0 322.6,532.4 334.4,531.3 346.3,531.1 358.1,530.6 370.0,530.3 381.8,526.4 393.7,516.9 405.5,512.3 417.4,507.0 429.2,500.0 441.1,492.3 452.9,488.4 464.8,483.9 476.6,480.8 488.5,432.5 500.4,413.1 512.2,390.5 524.1,376.7 535.9,362.7 547.8,340.3 559.6,322.9 571.5,312.7 583.3,302.9 595.2,289.1 607.0,281.0 618.9,272.4 630.7,264.2 642.6,256.3 654.4,248.6 666.3,247.5 678.1,247.5 690.0,247.5 701.9,247.5" fill="none" stroke="#2a7a7a" stroke-width="1.8"/>
<circle cx="85.5" cy="595.1" r="2.8" fill="#2a7a7a"/>
<circle cx="97.4" cy="587.1" r="2.8" fill="#2a7a7a"/>
<circle cx="109.2" cy="578.6" r="2.8" fill="#2a7a7a"/>
<circle cx="121.1" cy="570.6" r="2.8" fill="#2a7a7a"/>
<circle cx="132.9" cy="564.5" r="2.8" fill="#2a7a7a"/>
<circle cx="144.8" cy="559.2" r="2.8" fill="#2a7a7a"/>
<circle cx="156.6" cy="555.4" r="2.8" fill="#2a7a7a"/>
<circle cx="168.5" cy="552.7" r="2.8" fill="#2a7a7a"/>
<circle cx="180.3" cy="550.1" r="2.8" fill="#2a7a7a"/>
<circle cx="192.2" cy="547.6" r="2.8" fill="#2a7a7a"/>
<circle cx="204.0" cy="545.4" r="2.8" fill="#2a7a7a"/>
<circle cx="215.9" cy="544.1" r="2.8" fill="#2a7a7a"/>
<circle cx="227.7" cy="542.4" r="2.8" fill="#2a7a7a"/>
<circle cx="239.6" cy="541.1" r="2.8" fill="#2a7a7a"/>
<circle cx="251.4" cy="539.7" r="2.8" fill="#2a7a7a"/>
<circle cx="263.3" cy="538.0" r="2.8" fill="#2a7a7a"/>
<circle cx="275.1" cy="536.8" r="2.8" fill="#2a7a7a"/>
<circle cx="287.0" cy="535.0" r="2.8" fill="#2a7a7a"/>
<circle cx="298.9" cy="534.2" r="2.8" fill="#2a7a7a"/>
<circle cx="310.7" cy="533.0" r="2.8" fill="#2a7a7a"/>
<circle cx="322.6" cy="532.4" r="2.8" fill="#2a7a7a"/>
<circle cx="334.4" cy="531.3" r="2.8" fill="#2a7a7a"/>
<circle cx="346.3" cy="531.1" r="2.8" fill="#2a7a7a"/>
<circle cx="358.1" cy="530.6" r="2.8" fill="#2a7a7a"/>
<circle cx="370.0" cy="530.3" r="2.8" fill="#2a7a7a"/>
<circle cx="381.8" cy="526.4" r="2.8" fill="#2a7a7a"/>
<circle cx="393.7" cy="516.9" r="2.8" fill="#2a7a7a"/>
<circle cx="405.5" cy="512.3" r="2.8" fill="#2a7a7a"/>
<circle cx="417.4" cy="507.0" r="2.8" fill="#2a7a7a"/>
<circle cx="429.2" cy="500.0" r="2.8" fill="#2a7a7a"/>
<circle cx="441.1" cy="492.3" r="2.8" fill="#2a7a7a"/>
<circle cx="452.9" cy="488.4" r="2.8" fill="#2a7a7a"/>
<circle cx="464.8" cy="483.9" r="2.8" fill="#2a7a7a"/>
<circle cx="476.6" cy="480.8" r="2.8" fill="#2a7a7a"/>
<circle cx="488.5" cy="432.5" r="2.8" fill="#2a7a7a"/>
<circle cx="500.4" cy="413.1" r="2.8" fill="#2a7a7a"/>
<circle cx="512.2" cy="390.5" r="2.8" fill="#2a7a7a"/>
<circle cx="524.1" cy="376.7" r="2.8" fill="#2a7a7a"/>
<circle cx="535.9" cy="362.7" r="2.8" fill="#2a7a7a"/>
<circle cx="547.8" cy="340.3" r="2.8" fill="#2a7a7a"/>
<circle cx="559.6" cy="322.9" r="2.8" fill="#2a7a7a"/>
<circle cx="571.5" cy="312.7" r="2.8" fill="#2a7a7a"/>
<circle cx="583.3" cy="302.9" r="2.8" fill="#2a7a7a"/>
<circle cx="595.2" cy="289.1" r="2.8" fill="#2a7a7a"/>
<circle cx="607.0" cy="281.0" r="2.8" fill="#2a7a7a"/>
<circle cx="618.9" cy="272.4" r="2.8" fill="#2a7a7a"/>
<circle cx="630.7" cy="264.2" r="2.8" fill="#2a7a7a"/>
<circle cx="642.6" cy="256.3" r="2.8" fill="#2a7a7a"/>
<circle cx="654.4" cy="248.6" r="2.8" fill="#2a7a7a"/>
<circle cx="666.3" cy="247.5" r="2.8" fill="#2a7a7a"/>
<circle cx="678.1" cy="247.5" r="2.8" fill="#2a7a7a"/>
<circle cx="690.0" cy="247.5" r="2.8" fill="#2a7a7a"/>
<circle cx="701.9" cy="247.5" r="2.8" fill="#2a7a7a"/>
<polyline points="85.5,595.1 97.4,588.7 109.2,582.9 121.1,573.9 132.9,566.5 144.8,561.7 156.6,557.6 168.5,555.6 180.3,552.2 192.2,550.5 204.0,548.9 215.9,547.8 227.7,546.8 239.6,545.8 251.4,545.2 263.3,544.4 275.1,543.6 287.0,542.7 298.9,541.7 310.7,541.4 322.6,541.1 334.4,540.6 346.3,540.1 358.1,539.8 370.0,539.3 381.8,536.6 393.7,530.6 405.5,525.0 417.4,519.7 429.2,515.7 441.1,511.3 452.9,507.9 464.8,504.1 476.6,500.8 488.5,481.6 500.4,469.2 512.2,460.4 524.1,451.3 535.9,438.3 547.8,426.7 559.6,417.6 571.5,412.6 583.3,408.7 595.2,403.1 607.0,399.3 618.9,395.5 630.7,390.8 642.6,387.0 654.4,380.8 666.3,380.2 678.1,380.2 690.0,380.2 701.9,380.2" fill="none" stroke="#d9a93c" stroke-width="1.8"/>
<circle cx="85.5" cy="595.1" r="2.8" fill="#d9a93c"/>
<circle cx="97.4" cy="588.7" r="2.8" fill="#d9a93c"/>
<circle cx="109.2" cy="582.9" r="2.8" fill="#d9a93c"/>
<circle cx="121.1" cy="573.9" r="2.8" fill="#d9a93c"/>
<circle cx="132.9" cy="566.5" r="2.8" fill="#d9a93c"/>
<circle cx="144.8" cy="561.7" r="2.8" fill="#d9a93c"/>
<circle cx="156.6" cy="557.6" r="2.8" fill="#d9a93c"/>
<circle cx="168.5" cy="555.6" r="2.8" fill="#d9a93c"/>
<circle cx="180.3" cy="552.2" r="2.8" fill="#d9a93c"/>
<circle cx="192.2" cy="550.5" r="2.8" fill="#d9a93c"/>
<circle cx="204.0" cy="548.9" r="2.8" fill="#d9a93c"/>
<circle cx="215.9" cy="547.8" r="2.8" fill="#d9a93c"/>
<circle cx="227.7" cy="546.8" r="2.8" fill="#d9a93c"/>
<circle cx="239.6" cy="545.8" r="2.8" fill="#d9a93c"/>
<circle cx="251.4" cy="545.2" r="2.8" fill="#d9a93c"/>
<circle cx="263.3" cy="544.4" r="2.8" fill="#d9a93c"/>
<circle cx="275.1" cy="543.6" r="2.8" fill="#d9a93c"/>
<circle cx="287.0" cy="542.7" r="2.8" fill="#d9a93c"/>
<circle cx="298.9" cy="541.7" r="2.8" fill="#d9a93c"/>
<circle cx="310.7" cy="541.4" r="2.8" fill="#d9a93c"/>
<circle cx="322.6" cy="541.1" r="2.8" fill="#d9a93c"/>
<circle cx="334.4" cy="540.6" r="2.8" fill="#d9a93c"/>
<circle cx="346.3" cy="540.1" r="2.8" fill="#d9a93c"/>
<circle cx="358.1" cy="539.8" r="2.8" fill="#d9a93c"/>
<circle cx="370.0" cy="539.3" r="2.8" fill="#d9a93c"/>
<circle cx="381.8" cy="536.6" r="2.8" fill="#d9a93c"/>
<circle cx="393.7" cy="530.6" r="2.8" fill="#d9a93c"/>
<circle cx="405.5" cy="525.0" r="2.8" fill="#d9a93c"/>
<circle cx="417.4" cy="519.7" r="2.8" fill="#d9a93c"/>
<circle cx="429.2" cy="515.7" r="2.8" fill="#d9a93c"/>
<circle cx="441.1" cy="511.3" r="2.8" fill="#d9a93c"/>
<circle cx="452.9" cy="507.9" r="2.8" fill="#d9a93c"/>
<circle cx="464.8" cy="504.1" r="2.8" fill="#d9a93c"/>
<circle cx="476.6" cy="500.8" r="2.8" fill="#d9a93c"/>
<circle cx="488.5" cy="481.6" r="2.8" fill="#d9a93c"/>
<circle cx="500.4" cy="469.2" r="2.8" fill="#d9a93c"/>
<circle cx="512.2" cy="460.4" r="2.8" fill="#d9a93c"/>
<circle cx="524.1" cy="451.3" r="2.8" fill="#d9a93c"/>
<circle cx="535.9" cy="438.3" r="2.8" fill="#d9a93c"/>
<circle cx="547.8" cy="426.7" r="2.8" fill="#d9a93c"/>
<circle cx="559.6" cy="417.6" r="2.8" fill="#d9a93c"/>
<circle cx="571.5" cy="412.6" r="2.8" fill="#d9a93c"/>
<circle cx="583.3" cy="408.7" r="2.8" fill="#d9a93c"/>
<circle cx="595.2" cy="403.1" r="2.8" fill="#d9a93c"/>
<circle cx="607.0" cy="399.3" r="2.8" fill="#d9a93c"/>
<circle cx="618.9" cy="395.5" r="2.8" fill="#d9a93c"/>
<circle cx="630.7" cy="390.8" r="2.8" fill="#d9a93c"/>
<circle cx="642.6" cy="387.0" r="2.8" fill="#d9a93c"/>
<circle cx="654.4" cy="380.8" r="2.8" fill="#d9a93c"/>
<circle cx="666.3" cy="380.2" r="2.8" fill="#d9a93c"/>
<circle cx="678.1" cy="380.2" r="2.8" fill="#d9a93c"/>
<circle cx="690.0" cy="380.2" r="2.8" fill="#d9a93c"/>
<circle cx="701.9" cy="380.2" r="2.8" fill="#d9a93c"/>
<path d="M650.1,77.1 L652.2,79.7 L654.3,82.3 L656.5,84.8 L658.8,87.4 L661.2,89.9 L663.6,92.4 L666.0,94.9 L668.6,97.4 L671.2,99.8 L673.8,102.3 L676.5,104.7 L679.3,107.1 L682.2,109.5 L685.1,111.8 L688.1,114.2 L691.2,116.4 L694.4,118.5 L697.7,120.6 L701.0,122.7 L704.4,124.8 L707.9,126.9 L711.4,129.0 L715.0,131.0 L718.6,133.0 L722.3,135.0 L726.0,137.0 L729.8,138.9 L733.7,140.9 L737.6,142.8 L741.6,144.7 L743.4,141.3 L739.6,139.1 L736.0,136.8 L732.3,134.5 L728.8,132.3 L725.3,130.0 L721.9,127.6 L718.5,125.3 L715.3,123.0 L712.0,120.6 L708.9,118.3 L705.8,115.9 L702.8,113.5 L699.9,111.1 L697.0,108.7 L694.2,106.3 L691.3,104.0 L688.5,101.8 L685.8,99.5 L683.1,97.2 L680.5,94.8 L678.0,92.5 L675.5,90.2 L673.1,87.8 L670.7,85.4 L668.4,83.0 L666.2,80.6 L664.0,78.2 L661.9,75.8 L659.9,73.4 L657.9,70.9 Z" fill="#ee3b3b"/>
<circle cx="742.5" cy="143" r="2" fill="#ee3b3b"/>
<path d="M646.5,62 L651.5,89 L658,82 L668,80.5 L681.5,79.5 Z" fill="#ee3b3b" stroke="#ee3b3b" stroke-width="9" stroke-linejoin="round"/>
</svg>
<div style="position:absolute;left:24.2px;top:681.5px;width:23.5px;height:19px;background:#d9a93c"></div>
<div class="lg" style="left:54.8px;top:681.0px">Sport Alberta (2023)</div>
<div style="position:absolute;left:223.5px;top:681.5px;width:23.5px;height:19px;background:#2a7a7a"></div>
<div class="lg" style="left:254.1px;top:681.0px">Sport British Columbia (2023)</div>
<div style="position:absolute;left:485.0px;top:681.5px;width:23.5px;height:19px;background:#7b2fe0"></div>
<div class="lg" style="left:515.6px;top:681.0px">Sport Manitoba (2023)</div>
<div style="position:absolute;left:63.0px;top:712.4px;width:23.5px;height:19px;background:#d07898"></div>
<div class="lg" style="left:93.6px;top:711.9px">Sport New Brunswick (2023)</div>
<div style="position:absolute;left:318.0px;top:712.4px;width:23.5px;height:19px;background:#8a4a1e"></div>
<div class="lg" style="left:348.6px;top:711.9px">Sport Newfoundland and Labrado... (2023)</div>
<div style="position:absolute;left:109.0px;top:743.3px;width:23.5px;height:19px;background:#f08858"></div>
<div class="lg" style="left:139.6px;top:742.8px">Sport Nova Scotia (2023)</div>
<div style="position:absolute;left:339.0px;top:743.3px;width:23.5px;height:19px;background:#a6d246"></div>
<div class="lg" style="left:369.6px;top:742.8px">Sport Northwest Territories (2023)</div>
<div style="position:absolute;left:173.0px;top:774.2px;width:23.5px;height:19px;background:#4a6ee0"></div>
<div class="lg" style="left:203.6px;top:773.7px">Sport Nunavut (2023)</div>
<div style="position:absolute;left:375.0px;top:774.2px;width:23.5px;height:19px;background:#7a8898"></div>
<div class="lg" style="left:405.6px;top:773.7px">Sport Ontario (2023)</div>
<div style="position:absolute;left:30.8px;top:805.1px;width:23.5px;height:19px;background:#2a32b8"></div>
<div class="lg" style="left:61.4px;top:804.6px">Sport Prince Edward Island (2023)</div>
<div style="position:absolute;left:327.0px;top:805.1px;width:23.5px;height:19px;background:#7a2fa0"></div>
<div class="lg" style="left:357.6px;top:804.6px">Sport Quebec (2023)</div>
<div style="position:absolute;left:525.6px;top:805.1px;width:23.5px;height:19px;background:#8a1e2a"></div>
<div class="lg" style="left:556.2px;top:804.6px">Sport Yukon (2023)</div>
<div class="abs" style="left:262px;top:838px;font-size:18.3px;color:#3996ae;line-height:22px;white-space:nowrap">Change compared pages</div>
</body></html>
